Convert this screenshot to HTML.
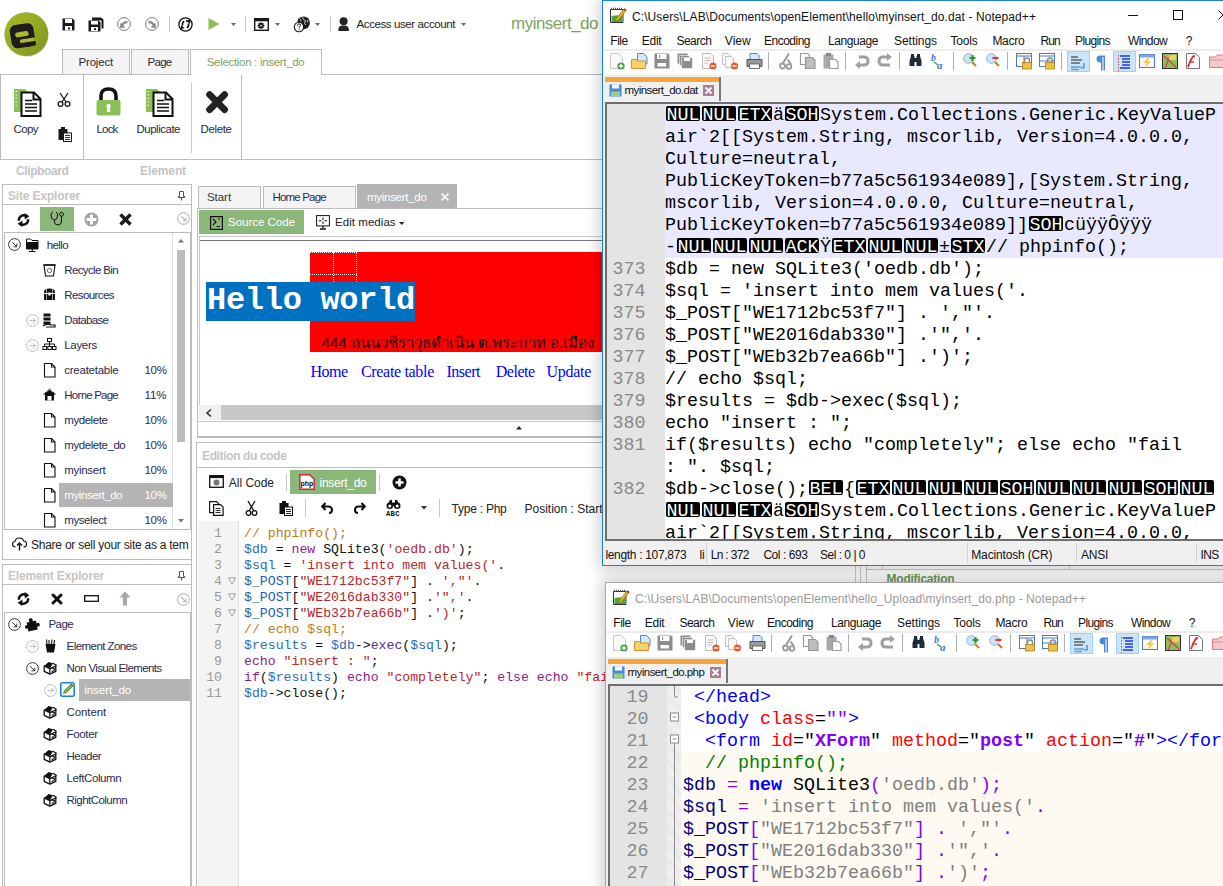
<!DOCTYPE html>
<html><head><meta charset="utf-8">
<style>
*{margin:0;padding:0;box-sizing:border-box}
html,body{width:1223px;height:886px;overflow:hidden;background:#fff}
body{position:relative;font-family:"Liberation Sans",sans-serif;font-size:11px;color:#222}
.a{position:absolute}
.t{position:absolute;white-space:nowrap;line-height:1}
</style></head><body>
<svg class="a" style="left:0px;top:8px;overflow:visible" width="54" height="54" viewBox="0 0 54 54"><defs><linearGradient id="lg" x1="0" y1="0" x2="1" y2="1"><stop offset="0" stop-color="#a9ba25"/><stop offset="1" stop-color="#7f951d"/></linearGradient></defs>
<circle cx="26.6" cy="26.6" r="22" fill="#555" opacity="0.35"/>
<circle cx="26.3" cy="26.1" r="21.9" fill="url(#lg)"/>
<g transform="rotate(-9 22.5 27)">
<rect x="9.6" y="15.2" width="25.4" height="25" rx="6.5" fill="#c2d02a" opacity="0.5"/>
<rect x="10.4" y="16" width="24" height="23.5" rx="6" fill="#1f1b1e"/>
<rect x="22" y="30" width="12.4" height="9.5" rx="2" fill="#1f1b1e"/>
<rect x="15.2" y="23.6" width="13.6" height="5" rx="2.5" fill="#a9bd27"/>
<rect x="19" y="31.2" width="15.6" height="3.6" rx="1.2" fill="#a9bd27"/><rect x="33.2" y="31.2" width="4" height="3.6" fill="#8ea21f"/>
</g></svg>
<svg class="a" style="left:62px;top:18px;overflow:visible" width="13" height="13" viewBox="0 0 13 13"><path d="M0.5 0.5h10l2 2v10h-12z" fill="#1a1a1a"/><rect x="3" y="1" width="7" height="4" fill="#fff"/><rect x="3" y="8" width="7" height="4.5" fill="#fff"/><rect x="6" y="9.5" width="2" height="2" fill="#1a1a1a"/></svg>
<svg class="a" style="left:88px;top:17px;overflow:visible" width="16" height="15" viewBox="0 0 16 15"><path d="M4 0.5h9l2.5 2v9h-2v-8h-9.5z" fill="#1a1a1a"/><path d="M0.5 3.5h10l2 2v9h-12z" fill="#1a1a1a"/><rect x="3" y="4" width="7" height="3.5" fill="#fff"/><rect x="3" y="10" width="7" height="4" fill="#fff"/><rect x="6" y="11.2" width="2" height="1.8" fill="#1a1a1a"/></svg>
<svg class="a" style="left:117px;top:17px;overflow:visible" width="14" height="14" viewBox="0 0 14 14"><circle cx="7" cy="7" r="6.4" fill="none" stroke="#7a7a7a" stroke-width="1"/><path d="M5.2 8.8 Q6 5 10.5 5.2" fill="none" stroke="#8a8a8a" stroke-width="2.3"/><path d="M3 11 L3.4 5.6 L8.4 10.6 Z" fill="#8a8a8a"/></svg>
<svg class="a" style="left:145px;top:17px;overflow:visible" width="14" height="14" viewBox="0 0 14 14"><circle cx="7" cy="7" r="6.4" fill="none" stroke="#7a7a7a" stroke-width="1"/><path d="M3.5 5.2 Q8 5 8.8 8.8" fill="none" stroke="#8a8a8a" stroke-width="2.3"/><path d="M11 11 L10.6 5.6 L5.6 10.6 Z" fill="#8a8a8a"/></svg>
<div class="a" style="left:169px;top:16px;width:1px;height:16px;background:#c8c8c8"></div>
<svg class="a" style="left:178px;top:17px;overflow:visible" width="15" height="15" viewBox="0 0 15 15"><circle cx="7.5" cy="7.5" r="6.6" fill="none" stroke="#111" stroke-width="1.3"/><path d="M6.2 4.2 Q4 5 4.5 8.5" fill="none" stroke="#111" stroke-width="1.6"/><path d="M2.8 12 L3 8 L6.8 11.2 Z" fill="#111"/><path d="M8.8 10.8 Q11 10 10.5 6.5" fill="none" stroke="#111" stroke-width="1.6"/><path d="M12.2 3 L12 7 L8.2 3.8 Z" fill="#111"/><path d="M8 4 H11" stroke="#111" stroke-width="1.5"/></svg>
<svg class="a" style="left:208px;top:18px;overflow:visible" width="12" height="12" viewBox="0 0 12 12"><path d="M0.5 0 L11.5 6 L0.5 12 Z" fill="#8cbf55"/></svg>
<svg class="a" style="left:231px;top:23px;overflow:visible" width="6" height="4" viewBox="0 0 6 4"><path d="M0 0h5l-2.5 3z" fill="#666"/></svg>
<div class="a" style="left:245px;top:16px;width:1px;height:16px;background:#c8c8c8"></div>
<svg class="a" style="left:254px;top:18px;overflow:visible" width="15" height="13" viewBox="0 0 15 13"><rect x="0.7" y="0.7" width="13.6" height="11.6" fill="none" stroke="#1a1a1a" stroke-width="1.4"/><rect x="0.7" y="0.7" width="13.6" height="2.6" fill="#1a1a1a"/><circle cx="7" cy="7.6" r="2.6" fill="#1a1a1a"/><path d="M7 4.2v6.8M3.6 7.6h6.8M4.6 5.2l4.8 4.8M9.4 5.2l-4.8 4.8" stroke="#1a1a1a" stroke-width="1.3"/><circle cx="7" cy="7.6" r="0.9" fill="#fff"/></svg>
<svg class="a" style="left:275px;top:23px;overflow:visible" width="6" height="4" viewBox="0 0 6 4"><path d="M0 0h5l-2.5 3z" fill="#666"/></svg>
<svg class="a" style="left:294px;top:16px;overflow:visible" width="16" height="16" viewBox="0 0 16 16"><circle cx="9.5" cy="6.8" r="6.4" fill="#1a1a1a"/><path d="M5.5 2.5 Q7.5 3.5 7 5.5 M9 1 Q8 3 10 4 Q12 4 11 6 Q10 8 12 9 M13.5 4 Q12.5 5 14 6.5" fill="none" stroke="#fff" stroke-width="0.8"/><circle cx="5" cy="11" r="4.7" fill="#fff" stroke="#1a1a1a" stroke-width="1.1"/><path d="M3.5 9.6 Q3.6 7.8 5.1 7.8 Q6.6 7.9 6.5 9.3 Q6.4 10.2 5.2 10.8 V11.8" fill="none" stroke="#1a1a1a" stroke-width="1"/><circle cx="5.2" cy="13.3" r="0.6" fill="#1a1a1a"/></svg>
<svg class="a" style="left:315px;top:23px;overflow:visible" width="6" height="4" viewBox="0 0 6 4"><path d="M0 0h5l-2.5 3z" fill="#666"/></svg>
<div class="a" style="left:330px;top:16px;width:1px;height:16px;background:#c8c8c8"></div>
<svg class="a" style="left:338px;top:16.5px;overflow:visible" width="12" height="14" viewBox="0 0 12 14"><circle cx="5.6" cy="4.3" r="4" fill="#222"/><path d="M0.3 14 Q0 9 4 8.6 H7.2 Q11.2 9 10.9 14 Z" fill="#222"/></svg>
<div class="t" style="left:356.50px;top:18.96px;font-size:11.5px;color:#222;letter-spacing:-0.397px;">Access user account</div>
<svg class="a" style="left:461px;top:23px;overflow:visible" width="6" height="4" viewBox="0 0 6 4"><path d="M0 0h5l-2.5 3z" fill="#666"/></svg>
<div class="t" style="left:511.00px;top:14.81px;font-size:17px;color:#7fa35f;letter-spacing:-0.507px;">myinsert_do</div>
<div class="a" style="left:62px;top:49px;width:68px;height:26px;background:#f4f4f4;border:1px solid #bcbcbc;border-bottom:none"></div>
<div class="t" style="left:78.50px;top:57.46px;font-size:11.5px;color:#2a2a3a;letter-spacing:-0.183px;">Project</div>
<div class="a" style="left:131px;top:49px;width:58px;height:26px;background:#f4f4f4;border:1px solid #bcbcbc;border-bottom:none"></div>
<div class="t" style="left:147.50px;top:57.46px;font-size:11.5px;color:#2a2a3a;letter-spacing:-0.711px;">Page</div>
<div class="a" style="left:190px;top:49px;width:132px;height:26px;background:#fff;border:1px solid #bcbcbc;border-bottom:none;z-index:2"></div>
<div class="t" style="left:206.70px;top:57.46px;font-size:11.5px;color:#7fa35f;letter-spacing:-0.307px;z-index:3">Selection : insert_do</div>
<div class="a" style="left:0px;top:74px;width:620px;height:86px;border-top:1px solid #bcbcbc;border-bottom:1px solid #bcbcbc;border-left:1px solid #bcbcbc"></div>
<div class="a" style="left:83px;top:74px;width:1px;height:86px;background:#bcbcbc"></div>
<div class="a" style="left:241px;top:74px;width:1px;height:86px;background:#bcbcbc"></div>
<div class="a" style="left:191px;top:82px;width:1px;height:71px;background:#c8c8c8"></div>
<svg class="a" style="left:13px;top:88px;overflow:visible" width="29" height="29" viewBox="0 0 29 29"><path d="M1 1h11l4 4v19h-15z" fill="#8cbf55"/><path d="M2.5 3.5h1.5M2.5 7h1.5M2.5 10.5h1.5M2.5 14h1.5M2.5 17.5h1.5" stroke="#fff" stroke-width="1.2"/>
<path d="M8.5 4.5h12.5l6.5 6.5v17h-19z" fill="#fff" stroke="#111" stroke-width="2"/><path d="M20.5 4.5v7h7" fill="none" stroke="#111" stroke-width="2"/>
<path d="M12 12.5h7M12 16h12M12 19.5h12M12 23h12" stroke="#111" stroke-width="1.6"/></svg>
<div class="t" style="left:13.50px;top:123.96px;font-size:11.5px;color:#2a2a3a;letter-spacing:-0.586px;">Copy</div>
<svg class="a" style="left:57px;top:93px;overflow:visible" width="14" height="14" viewBox="0 0 14 14"><path d="M3 0 L9 9 M11 0 L5 9" stroke="#1a1a1a" stroke-width="1.3"/><circle cx="3.5" cy="11" r="2.4" fill="none" stroke="#1a1a1a" stroke-width="1.3"/><circle cx="10.5" cy="11" r="2.4" fill="none" stroke="#1a1a1a" stroke-width="1.3"/></svg>
<svg class="a" style="left:58px;top:126px;overflow:visible" width="14" height="16" viewBox="0 0 14 16"><path d="M0.5 3h9v11h-9z" fill="#1a1a1a"/><rect x="3" y="1" width="4" height="3" fill="#1a1a1a"/><rect x="5.5" y="7" width="8" height="8.5" fill="#fff" stroke="#1a1a1a" stroke-width="1"/><path d="M7 9.5h5M7 11.5h5M7 13.5h5" stroke="#1a1a1a" stroke-width="0.9"/></svg>
<svg class="a" style="left:96px;top:87px;overflow:visible" width="25" height="29" viewBox="0 0 25 29"><path d="M5 15 V9 Q5 2 12.5 2 Q20 2 20 9 V15" fill="none" stroke="#111" stroke-width="3.6"/><rect x="0.5" y="13" width="24" height="15.5" rx="2" fill="#8cbf55"/><circle cx="12.5" cy="19" r="2.2" fill="#fff"/><path d="M11.3 19h2.4l0.6 6h-3.6z" fill="#fff"/></svg>
<div class="t" style="left:96.50px;top:123.96px;font-size:11.5px;color:#2a2a3a;letter-spacing:-0.820px;">Lock</div>
<svg class="a" style="left:145px;top:88px;overflow:visible" width="29" height="29" viewBox="0 0 29 29"><path d="M1 1h11l4 4v19h-15z" fill="#8cbf55"/><path d="M2.5 3.5h1.5M2.5 7h1.5M2.5 10.5h1.5M2.5 14h1.5M2.5 17.5h1.5" stroke="#fff" stroke-width="1.2"/>
<path d="M8.5 4.5h12.5l6.5 6.5v17h-19z" fill="#fff" stroke="#111" stroke-width="2"/><path d="M20.5 4.5v7h7" fill="none" stroke="#111" stroke-width="2"/>
<path d="M12 12.5h7M12 16h12M12 19.5h12M12 23h12" stroke="#111" stroke-width="1.6"/></svg>
<div class="t" style="left:136.50px;top:123.96px;font-size:11.5px;color:#2a2a3a;letter-spacing:-0.493px;">Duplicate</div>
<svg class="a" style="left:205px;top:90px;overflow:visible" width="24" height="24" viewBox="0 0 24 24"><path d="M4.6 4.6 L19.6 19.6 M19.6 4.6 L4.6 19.6" stroke="#222" stroke-width="6.8" stroke-linecap="round"/></svg>
<div class="t" style="left:200.50px;top:123.96px;font-size:11.5px;color:#2a2a3a;letter-spacing:-0.372px;">Delete</div>
<div class="t" style="left:16.00px;top:165.04px;font-size:12px;color:#c4c4c4;letter-spacing:-0.387px;font-weight:bold;">Clipboard</div>
<div class="t" style="left:140.00px;top:165.04px;font-size:12px;color:#c4c4c4;letter-spacing:-0.096px;font-weight:bold;">Element</div>
<div class="a" style="left:2px;top:184px;width:190px;height:376px;border:1px solid #bcbcbc;background:#fff"></div>
<div class="t" style="left:8.00px;top:189.54px;font-size:12px;color:#c8c4c0;letter-spacing:-0.154px;font-weight:bold;">Site Explorer</div>
<svg class="a" style="left:178px;top:191px;overflow:visible" width="7" height="9" viewBox="0 0 7 9"><path d="M1.5 0.5h4v5h1.3v1h-6.6v-1h1.3z" fill="none" stroke="#555" stroke-width="1"/><path d="M3.5 6.5v3" stroke="#555" stroke-width="1"/></svg>
<div class="a" style="left:2px;top:204px;width:190px;height:1px;background:#bcbcbc"></div>
<svg class="a" style="left:17px;top:213px;overflow:visible" width="13" height="14" viewBox="0 0 13 14"><path d="M2 7.8 A4.6 4.6 0 0 1 9 3.1" fill="none" stroke="#111" stroke-width="2.4"/><path d="M7.6 0 L12.4 3.2 L7.8 6.4 Z" fill="#111"/><path d="M11 6.2 A4.6 4.6 0 0 1 4 10.9" fill="none" stroke="#111" stroke-width="2.4"/><path d="M5.4 7.6 L0.6 10.8 L5.2 14 Z" fill="#111"/></svg>
<div class="a" style="left:40px;top:207px;width:34px;height:24px;background:#8cb77a"></div>
<svg class="a" style="left:50px;top:211px;overflow:visible" width="14" height="15" viewBox="0 0 14 15"><path d="M3 1 Q0.5 2 1 5 Q2 9 4.5 9 Q7 9 7.5 5 Q8 2 6 1" fill="none" stroke="#111" stroke-width="1"/><path d="M4.5 9 V11 Q4.5 14 8 14 Q11.5 14 11.5 10 V5" fill="none" stroke="#111" stroke-width="1"/><circle cx="11.5" cy="3.3" r="1.9" fill="none" stroke="#111" stroke-width="1"/></svg>
<svg class="a" style="left:84px;top:212px;overflow:visible" width="15" height="15" viewBox="0 0 15 15"><circle cx="7.5" cy="7.5" r="6.9" fill="#a4a4a4"/><path d="M7.5 2.6v9.8M2.6 7.5h9.8" stroke="#fff" stroke-width="3"/><circle cx="7.5" cy="7.5" r="6.2" fill="none" stroke="#a4a4a4" stroke-width="1.2"/></svg>
<svg class="a" style="left:119px;top:213px;overflow:visible" width="13" height="13" viewBox="0 0 13 13"><path d="M1.5 1.5 L11.5 11.5 M11.5 1.5 L1.5 11.5" stroke="#1a1a1a" stroke-width="3.4"/></svg>
<svg class="a" style="left:177px;top:212px;overflow:visible" width="13" height="13" viewBox="0 0 13 13"><circle cx="6.5" cy="6.5" r="5.9" fill="none" stroke="#bdbdbd" stroke-width="1.1"/><path d="M4 4 L9 9 M9 5.5 V9 H5.5" fill="none" stroke="#bdbdbd" stroke-width="1.1"/></svg>
<div class="a" style="left:4px;top:232px;width:187px;height:298px;border:1px solid #bcbcbc;background:#fff"></div>
<div class="a" style="left:172px;top:233px;width:1px;height:296px;background:#e0e0e0"></div>
<div class="a" style="left:177px;top:250px;width:8px;height:192px;background:#bcbcbc"></div>
<svg class="a" style="left:178px;top:239px;overflow:visible" width="6" height="4" viewBox="0 0 6 4"><path d="M0 3.5h6l-3-3.5z" fill="#777"/></svg>
<svg class="a" style="left:178px;top:519px;overflow:visible" width="6" height="4" viewBox="0 0 6 4"><path d="M0 0h6l-3 3.5z" fill="#777"/></svg>
<svg class="a" style="left:8px;top:238px;overflow:visible" width="13" height="13" viewBox="0 0 13 13"><circle cx="6.5" cy="6.5" r="5.9" fill="none" stroke="#222" stroke-width="0.9"/><path d="M4.2 4.2 L8.8 8.8 M8.8 5.6 V8.8 H5.6" fill="none" stroke="#222" stroke-width="0.9"/></svg>
<svg class="a" style="left:26px;top:238px;overflow:visible" width="13" height="15" viewBox="0 0 13 15"><path d="M0.5 1h4l1.5 1.5h6v8.5h-11.5z" fill="#fff" stroke="#111" stroke-width="1"/><path d="M0.5 4h11.5v7h-11.5z" fill="#111"/><path d="M6.3 11v2.5M3 13.5h6.5" stroke="#111" stroke-width="1.2"/></svg>
<div class="t" style="left:46.70px;top:239.96px;font-size:11.5px;color:#2a2a50;letter-spacing:-0.599px;">hello</div>
<svg class="a" style="left:43px;top:263px;overflow:visible" width="13" height="14" viewBox="0 0 13 14"><path d="M1 2h11l-1.5 11h-8z" fill="#fff" stroke="#111" stroke-width="1.1"/><path d="M0.5 2h12" stroke="#111" stroke-width="1.5"/><circle cx="6.5" cy="7.5" r="2.2" fill="none" stroke="#555" stroke-width="0.9"/></svg>
<div class="t" style="left:64.30px;top:264.96px;font-size:11.5px;color:#2a2a50;letter-spacing:-0.638px;">Recycle Bin</div>
<svg class="a" style="left:43px;top:288px;overflow:visible" width="13" height="14" viewBox="0 0 13 14"><path d="M1 4 Q1 0.5 6.5 0.5 Q12 0.5 12 4 V12 H1 Z" fill="#111"/><path d="M1 5.5h11" stroke="#fff" stroke-width="1"/><rect x="5.3" y="4.5" width="2.4" height="3" fill="#fff"/><path d="M3.5 1 V12 M9.5 1 V12" stroke="#fff" stroke-width="0.6"/></svg>
<div class="t" style="left:64.30px;top:289.96px;font-size:11.5px;color:#2a2a50;letter-spacing:-0.606px;">Resources</div>
<svg class="a" style="left:26px;top:314px;overflow:visible" width="13" height="13" viewBox="0 0 13 13"><circle cx="6.5" cy="6.5" r="5.9" fill="none" stroke="#c0c0c0" stroke-width="1"/><path d="M3.5 6.5 H9.5 M7 4 L9.5 6.5 L7 9" fill="none" stroke="#c0c0c0" stroke-width="1"/></svg>
<svg class="a" style="left:43px;top:313px;overflow:visible" width="13" height="14" viewBox="0 0 13 14"><rect x="0.5" y="0.5" width="7" height="3" fill="#111"/><rect x="0.5" y="4.5" width="7" height="3" fill="#111"/><rect x="0.5" y="8.5" width="7" height="3" fill="#111"/><path d="M0 13 Q4 10 8 12 L12 12 V14 H3" fill="none" stroke="#111" stroke-width="1.2"/></svg>
<div class="t" style="left:64.30px;top:314.96px;font-size:11.5px;color:#2a2a50;letter-spacing:-0.650px;">Database</div>
<svg class="a" style="left:26px;top:339px;overflow:visible" width="13" height="13" viewBox="0 0 13 13"><circle cx="6.5" cy="6.5" r="5.9" fill="none" stroke="#c0c0c0" stroke-width="1"/><path d="M3.5 6.5 H9.5 M7 4 L9.5 6.5 L7 9" fill="none" stroke="#c0c0c0" stroke-width="1"/></svg>
<svg class="a" style="left:43px;top:338px;overflow:visible" width="13" height="14" viewBox="0 0 13 14"><rect x="4.5" y="0.5" width="4" height="3" fill="none" stroke="#111" stroke-width="1"/><path d="M6.5 3.5v2.5M1.5 6h10M1.5 6v2M6.5 6v2M11.5 6v2" stroke="#111" stroke-width="1"/><rect x="0" y="8.5" width="3.5" height="3" fill="none" stroke="#111" stroke-width="1"/><rect x="4.8" y="8.5" width="3.5" height="3" fill="none" stroke="#111" stroke-width="1"/><rect x="9.5" y="8.5" width="3.5" height="3" fill="none" stroke="#111" stroke-width="1"/></svg>
<div class="t" style="left:64.30px;top:339.96px;font-size:11.5px;color:#2a2a50;letter-spacing:-0.333px;">Layers</div>
<svg class="a" style="left:43px;top:363px;overflow:visible" width="13" height="14" viewBox="0 0 13 14"><path d="M1.5 0.5h7l3.5 3.5v10h-10.5z" fill="#fff" stroke="#111" stroke-width="1.1"/><path d="M8.5 0.5v3.5h3.5" fill="none" stroke="#111" stroke-width="1.1"/></svg>
<div class="t" style="left:64.30px;top:364.96px;font-size:11.5px;color:#2a2a50;letter-spacing:-0.260px;">createtable</div>
<div class="t" style="left:144.50px;top:364.96px;font-size:11.5px;color:#2a2a50;letter-spacing:-0.333px;">10%</div>
<svg class="a" style="left:43px;top:388px;overflow:visible" width="13" height="14" viewBox="0 0 13 14"><path d="M6.5 0.5 L13 6.5 H11 V12.5 H2 V6.5 H0 Z" fill="#111"/><rect x="4.5" y="8" width="4" height="4.5" fill="#fff"/><path d="M3 4 L6.5 1.5 L10 4" fill="none" stroke="#fff" stroke-width="0.7"/></svg>
<div class="t" style="left:64.30px;top:389.96px;font-size:11.5px;color:#2a2a50;letter-spacing:-0.800px;">Home Page</div>
<div class="t" style="left:144.50px;top:389.96px;font-size:11.5px;color:#2a2a50;letter-spacing:-0.047px;">11%</div>
<svg class="a" style="left:43px;top:413px;overflow:visible" width="13" height="14" viewBox="0 0 13 14"><path d="M1.5 0.5h7l3.5 3.5v10h-10.5z" fill="#fff" stroke="#111" stroke-width="1.1"/><path d="M8.5 0.5v3.5h3.5" fill="none" stroke="#111" stroke-width="1.1"/></svg>
<div class="t" style="left:64.30px;top:414.96px;font-size:11.5px;color:#2a2a50;letter-spacing:-0.455px;">mydelete</div>
<div class="t" style="left:144.50px;top:414.96px;font-size:11.5px;color:#2a2a50;letter-spacing:-0.333px;">10%</div>
<svg class="a" style="left:43px;top:438px;overflow:visible" width="13" height="14" viewBox="0 0 13 14"><path d="M1.5 0.5h7l3.5 3.5v10h-10.5z" fill="#fff" stroke="#111" stroke-width="1.1"/><path d="M8.5 0.5v3.5h3.5" fill="none" stroke="#111" stroke-width="1.1"/></svg>
<div class="t" style="left:64.30px;top:439.96px;font-size:11.5px;color:#2a2a50;letter-spacing:-0.438px;">mydelete_do</div>
<div class="t" style="left:144.50px;top:439.96px;font-size:11.5px;color:#2a2a50;letter-spacing:-0.333px;">10%</div>
<svg class="a" style="left:43px;top:463px;overflow:visible" width="13" height="14" viewBox="0 0 13 14"><path d="M1.5 0.5h7l3.5 3.5v10h-10.5z" fill="#fff" stroke="#111" stroke-width="1.1"/><path d="M8.5 0.5v3.5h3.5" fill="none" stroke="#111" stroke-width="1.1"/></svg>
<div class="t" style="left:64.30px;top:464.96px;font-size:11.5px;color:#2a2a50;letter-spacing:-0.305px;">myinsert</div>
<div class="t" style="left:144.50px;top:464.96px;font-size:11.5px;color:#2a2a50;letter-spacing:-0.333px;">10%</div>
<div class="a" style="left:59px;top:483px;width:114px;height:24px;background:#b4b4b4"></div>
<svg class="a" style="left:43px;top:488px;overflow:visible" width="13" height="14" viewBox="0 0 13 14"><path d="M1.5 0.5h7l3.5 3.5v10h-10.5z" fill="#fff" stroke="#111" stroke-width="1.1"/><path d="M8.5 0.5v3.5h3.5" fill="none" stroke="#111" stroke-width="1.1"/></svg>
<div class="t" style="left:64.30px;top:489.96px;font-size:11.5px;color:#fff;letter-spacing:-0.419px;">myinsert_do</div>
<div class="t" style="left:144.50px;top:489.96px;font-size:11.5px;color:#fff;letter-spacing:-0.333px;">10%</div>
<svg class="a" style="left:43px;top:513px;overflow:visible" width="13" height="14" viewBox="0 0 13 14"><path d="M1.5 0.5h7l3.5 3.5v10h-10.5z" fill="#fff" stroke="#111" stroke-width="1.1"/><path d="M8.5 0.5v3.5h3.5" fill="none" stroke="#111" stroke-width="1.1"/></svg>
<div class="t" style="left:64.30px;top:514.96px;font-size:11.5px;color:#2a2a50;letter-spacing:-0.420px;">myselect</div>
<div class="t" style="left:144.50px;top:514.96px;font-size:11.5px;color:#2a2a50;letter-spacing:-0.333px;">10%</div>
<svg class="a" style="left:12px;top:537px;overflow:visible" width="15" height="14" viewBox="0 0 15 14"><path d="M3.5 10 Q0.5 10 0.5 7 Q0.5 4.5 3 4.5 Q3.5 1 7.5 1 Q11 1 11.5 4 Q14.5 4 14.5 7.2 Q14.5 10 11.5 10" fill="none" stroke="#111" stroke-width="1.1"/><path d="M7.5 13.5 V6 M5 8.5 L7.5 6 L10 8.5" fill="none" stroke="#111" stroke-width="1.4"/></svg>
<div class="t" style="left:31.00px;top:538.54px;font-size:12px;color:#222;letter-spacing:-0.246px;">Share or sell your site as a tem</div>
<div class="a" style="left:2px;top:564px;width:190px;height:330px;border:1px solid #bcbcbc;background:#fff"></div>
<div class="t" style="left:8.00px;top:569.54px;font-size:12px;color:#c8c4c0;letter-spacing:-0.167px;font-weight:bold;">Element Explorer</div>
<svg class="a" style="left:178px;top:571px;overflow:visible" width="7" height="9" viewBox="0 0 7 9"><path d="M1.5 0.5h4v5h1.3v1h-6.6v-1h1.3z" fill="none" stroke="#555" stroke-width="1"/><path d="M3.5 6.5v3" stroke="#555" stroke-width="1"/></svg>
<div class="a" style="left:2px;top:584px;width:190px;height:1px;background:#bcbcbc"></div>
<svg class="a" style="left:17px;top:592px;overflow:visible" width="13" height="14" viewBox="0 0 13 14"><path d="M2 7.8 A4.6 4.6 0 0 1 9 3.1" fill="none" stroke="#111" stroke-width="2.4"/><path d="M7.6 0 L12.4 3.2 L7.8 6.4 Z" fill="#111"/><path d="M11 6.2 A4.6 4.6 0 0 1 4 10.9" fill="none" stroke="#111" stroke-width="2.4"/><path d="M5.4 7.6 L0.6 10.8 L5.2 14 Z" fill="#111"/></svg>
<svg class="a" style="left:51px;top:593px;overflow:visible" width="12" height="12" viewBox="0 0 12 12"><path d="M2 2 L10 10 M10 2 L2 10" stroke="#111" stroke-width="3" stroke-linecap="round"/></svg>
<svg class="a" style="left:84px;top:595px;overflow:visible" width="15" height="7" viewBox="0 0 15 7"><rect x="0.7" y="0.7" width="13.6" height="5.6" fill="none" stroke="#111" stroke-width="1.3"/></svg>
<svg class="a" style="left:119px;top:591px;overflow:visible" width="12" height="15" viewBox="0 0 12 15"><path d="M6 0.5 L11.5 6.5 H8 V14.5 H4 V6.5 H0.5 Z" fill="#a8a8a8"/></svg>
<svg class="a" style="left:177px;top:593px;overflow:visible" width="13" height="13" viewBox="0 0 13 13"><circle cx="6.5" cy="6.5" r="5.9" fill="none" stroke="#bdbdbd" stroke-width="1.1"/><path d="M4 4 L9 9 M9 5.5 V9 H5.5" fill="none" stroke="#bdbdbd" stroke-width="1.1"/></svg>
<div class="a" style="left:4px;top:612px;width:187px;height:280px;border:1px solid #bcbcbc;background:#fff"></div>
<svg class="a" style="left:8px;top:618px;overflow:visible" width="13" height="13" viewBox="0 0 13 13"><circle cx="6.5" cy="6.5" r="5.9" fill="none" stroke="#222" stroke-width="0.9"/><path d="M4.2 4.2 L8.8 8.8 M8.8 5.6 V8.8 H5.6" fill="none" stroke="#222" stroke-width="0.9"/></svg>
<svg class="a" style="left:25px;top:617px;overflow:visible" width="14" height="14" viewBox="0 0 14 14"><g transform="rotate(-12 7 7)"><path d="M2 4.5 H5 Q3.8 1 6.6 1 Q9.4 1 8.2 4.5 H11.5 V7.5 Q14.5 6.3 14.5 9 Q14.5 11.7 11.5 10.5 V13.5 H2 V10.3 Q-0.5 11.3 -0.5 8.8 Q-0.5 6.3 2 7.3 Z" fill="#111"/></g></svg>
<div class="t" style="left:48.50px;top:619.46px;font-size:11.5px;color:#2a2a50;letter-spacing:-0.586px;">Page</div>
<svg class="a" style="left:26px;top:640px;overflow:visible" width="13" height="13" viewBox="0 0 13 13"><circle cx="6.5" cy="6.5" r="5.9" fill="none" stroke="#c0c0c0" stroke-width="1"/><path d="M3.5 6.5 H9.5 M7 4 L9.5 6.5 L7 9" fill="none" stroke="#c0c0c0" stroke-width="1"/></svg>
<svg class="a" style="left:44.5px;top:639px;overflow:visible" width="11" height="14" viewBox="0 0 11 14"><path d="M0.5 5h10l-1.5 8.5h-7z" fill="#111"/><path d="M2 5 L1.5 0.5 M4 5 V1 M6.5 5 L7 0.5 M9 5 L9.5 1" stroke="#111" stroke-width="1.1"/></svg>
<div class="t" style="left:66.60px;top:641.46px;font-size:11.5px;color:#2a2a50;letter-spacing:-0.562px;">Element Zones</div>
<svg class="a" style="left:26px;top:662px;overflow:visible" width="13" height="13" viewBox="0 0 13 13"><circle cx="6.5" cy="6.5" r="5.9" fill="none" stroke="#222" stroke-width="0.9"/><path d="M4.2 4.2 L8.8 8.8 M8.8 5.6 V8.8 H5.6" fill="none" stroke="#222" stroke-width="0.9"/></svg>
<svg class="a" style="left:43px;top:661px;overflow:visible" width="13" height="14" viewBox="0 0 13 14"><path d="M1.2 5 L6.8 7.6 L12.8 5 V10.4 L6.8 13.2 L1.2 10.4 Z" fill="#fff" stroke="#111" stroke-width="1.3" stroke-linejoin="round"/><path d="M6.8 7.6 V13" stroke="#111" stroke-width="1.2"/><path d="M1.2 5 L5.5 1 L10 2.2 L6.8 7.6 Z" fill="#111"/><path d="M10 2.2 L13.2 4.2 L12.8 5" fill="none" stroke="#111" stroke-width="1.2"/><path d="M8.5 7.2 Q11.8 6.8 11.5 8.6 Q11 10 8.6 10.4" fill="none" stroke="#111" stroke-width="1.2"/></svg>
<div class="t" style="left:66.60px;top:663.46px;font-size:11.5px;color:#2a2a50;letter-spacing:-0.617px;">Non Visual Elements</div>
<svg class="a" style="left:44px;top:684px;overflow:visible" width="13" height="13" viewBox="0 0 13 13"><circle cx="6.5" cy="6.5" r="5.9" fill="none" stroke="#c0c0c0" stroke-width="1"/><path d="M3.5 6.5 H9.5 M7 4 L9.5 6.5 L7 9" fill="none" stroke="#c0c0c0" stroke-width="1"/></svg>
<svg class="a" style="left:60px;top:682px;overflow:visible" width="15" height="15" viewBox="0 0 15 15"><rect x="0.8" y="0.8" width="13.4" height="13.4" rx="1.5" fill="#fff" stroke="#1e7fd8" stroke-width="1.6"/><path d="M3.5 11.5 L4.5 8.5 L11 2 L13 4 L6.5 10.5 Z" fill="#6cc04a" stroke="#2d6a1a" stroke-width="0.6"/><path d="M11 2 L13 4" stroke="#d03030" stroke-width="1.5"/></svg>
<div class="a" style="left:79px;top:679px;width:111px;height:22px;background:#b4b4b4"></div>
<div class="t" style="left:84.20px;top:685.46px;font-size:11.5px;color:#fff;letter-spacing:-0.031px;">insert_do</div>
<svg class="a" style="left:43px;top:705px;overflow:visible" width="13" height="14" viewBox="0 0 13 14"><path d="M1.2 5 L6.8 7.6 L12.8 5 V10.4 L6.8 13.2 L1.2 10.4 Z" fill="#fff" stroke="#111" stroke-width="1.3" stroke-linejoin="round"/><path d="M6.8 7.6 V13" stroke="#111" stroke-width="1.2"/><path d="M1.2 5 L5.5 1 L10 2.2 L6.8 7.6 Z" fill="#111"/><path d="M10 2.2 L13.2 4.2 L12.8 5" fill="none" stroke="#111" stroke-width="1.2"/><path d="M8.5 7.2 Q11.8 6.8 11.5 8.6 Q11 10 8.6 10.4" fill="none" stroke="#111" stroke-width="1.2"/></svg>
<div class="t" style="left:66.60px;top:707.46px;font-size:11.5px;color:#2a2a50;letter-spacing:-0.107px;">Content</div>
<svg class="a" style="left:43px;top:727px;overflow:visible" width="13" height="14" viewBox="0 0 13 14"><path d="M1.2 5 L6.8 7.6 L12.8 5 V10.4 L6.8 13.2 L1.2 10.4 Z" fill="#fff" stroke="#111" stroke-width="1.3" stroke-linejoin="round"/><path d="M6.8 7.6 V13" stroke="#111" stroke-width="1.2"/><path d="M1.2 5 L5.5 1 L10 2.2 L6.8 7.6 Z" fill="#111"/><path d="M10 2.2 L13.2 4.2 L12.8 5" fill="none" stroke="#111" stroke-width="1.2"/><path d="M8.5 7.2 Q11.8 6.8 11.5 8.6 Q11 10 8.6 10.4" fill="none" stroke="#111" stroke-width="1.2"/></svg>
<div class="t" style="left:66.60px;top:729.46px;font-size:11.5px;color:#2a2a50;letter-spacing:-0.370px;">Footer</div>
<svg class="a" style="left:43px;top:749px;overflow:visible" width="13" height="14" viewBox="0 0 13 14"><path d="M1.2 5 L6.8 7.6 L12.8 5 V10.4 L6.8 13.2 L1.2 10.4 Z" fill="#fff" stroke="#111" stroke-width="1.3" stroke-linejoin="round"/><path d="M6.8 7.6 V13" stroke="#111" stroke-width="1.2"/><path d="M1.2 5 L5.5 1 L10 2.2 L6.8 7.6 Z" fill="#111"/><path d="M10 2.2 L13.2 4.2 L12.8 5" fill="none" stroke="#111" stroke-width="1.2"/><path d="M8.5 7.2 Q11.8 6.8 11.5 8.6 Q11 10 8.6 10.4" fill="none" stroke="#111" stroke-width="1.2"/></svg>
<div class="t" style="left:66.60px;top:751.46px;font-size:11.5px;color:#2a2a50;letter-spacing:-0.534px;">Header</div>
<svg class="a" style="left:43px;top:771px;overflow:visible" width="13" height="14" viewBox="0 0 13 14"><path d="M1.2 5 L6.8 7.6 L12.8 5 V10.4 L6.8 13.2 L1.2 10.4 Z" fill="#fff" stroke="#111" stroke-width="1.3" stroke-linejoin="round"/><path d="M6.8 7.6 V13" stroke="#111" stroke-width="1.2"/><path d="M1.2 5 L5.5 1 L10 2.2 L6.8 7.6 Z" fill="#111"/><path d="M10 2.2 L13.2 4.2 L12.8 5" fill="none" stroke="#111" stroke-width="1.2"/><path d="M8.5 7.2 Q11.8 6.8 11.5 8.6 Q11 10 8.6 10.4" fill="none" stroke="#111" stroke-width="1.2"/></svg>
<div class="t" style="left:66.60px;top:773.46px;font-size:11.5px;color:#2a2a50;letter-spacing:-0.428px;">LeftColumn</div>
<svg class="a" style="left:43px;top:793px;overflow:visible" width="13" height="14" viewBox="0 0 13 14"><path d="M1.2 5 L6.8 7.6 L12.8 5 V10.4 L6.8 13.2 L1.2 10.4 Z" fill="#fff" stroke="#111" stroke-width="1.3" stroke-linejoin="round"/><path d="M6.8 7.6 V13" stroke="#111" stroke-width="1.2"/><path d="M1.2 5 L5.5 1 L10 2.2 L6.8 7.6 Z" fill="#111"/><path d="M10 2.2 L13.2 4.2 L12.8 5" fill="none" stroke="#111" stroke-width="1.2"/><path d="M8.5 7.2 Q11.8 6.8 11.5 8.6 Q11 10 8.6 10.4" fill="none" stroke="#111" stroke-width="1.2"/></svg>
<div class="t" style="left:66.60px;top:795.46px;font-size:11.5px;color:#2a2a50;letter-spacing:-0.543px;">RightColumn</div>
<div class="a" style="left:191px;top:184px;width:1px;height:702px;background:#bcbcbc"></div>
<div class="a" style="left:198px;top:186px;width:63px;height:22px;background:#f4f4f4;border:1px solid #bcbcbc;border-bottom:none"></div>
<div class="t" style="left:207.00px;top:192.46px;font-size:11.5px;color:#333;letter-spacing:-0.053px;">Start</div>
<div class="a" style="left:263px;top:186px;width:93px;height:22px;background:#f4f4f4;border:1px solid #bcbcbc;border-bottom:none"></div>
<div class="t" style="left:272.50px;top:192.46px;font-size:11.5px;color:#2a2a50;letter-spacing:-0.823px;">Home Page</div>
<div class="a" style="left:357px;top:184px;width:100px;height:24px;background:#b4b4b4"></div>
<div class="t" style="left:367.00px;top:191.96px;font-size:11.5px;color:#fff;letter-spacing:-0.283px;">myinsert_do</div>
<svg class="a" style="left:441px;top:193px;overflow:visible" width="8" height="8" viewBox="0 0 8 8"><path d="M0.5 0.5 L7.5 7.5 M7.5 0.5 L0.5 7.5" stroke="#fff" stroke-width="1.5"/></svg>
<div class="a" style="left:197px;top:208px;width:430px;height:230px;border:1px solid #bcbcbc;background:#fff"></div>
<div class="a" style="left:199px;top:210px;width:105px;height:24px;background:#8cb77a"></div>
<svg class="a" style="left:210px;top:216px;overflow:visible" width="13" height="14" viewBox="0 0 13 14"><rect x="0.6" y="0.6" width="11.8" height="12.8" fill="none" stroke="#111" stroke-width="1.2"/><path d="M3 3 L6 6 L3 9 M6.5 10.5h3.5 M8 3h2" fill="none" stroke="#111" stroke-width="1.1"/></svg>
<div class="t" style="left:228.00px;top:217.46px;font-size:11.5px;color:#fff;letter-spacing:-0.009px;">Source Code</div>
<svg class="a" style="left:316px;top:215px;overflow:visible" width="14" height="15" viewBox="0 0 14 15"><rect x="0.6" y="0.6" width="12.8" height="10.3" fill="none" stroke="#111" stroke-width="1"/><path d="M7 2.5v2.5M7 6.5v2.5M3 5.8h2.5M8.5 5.8h2.5" stroke="#111" stroke-width="1"/><path d="M7 11v2M4 14h6" stroke="#111" stroke-width="1.4"/></svg>
<div class="t" style="left:335.00px;top:217.46px;font-size:11.5px;color:#222;letter-spacing:0.049px;">Edit medias</div>
<svg class="a" style="left:399px;top:222px;overflow:visible" width="6" height="4" viewBox="0 0 6 4"><path d="M0 0h5.5l-2.75 3z" fill="#222"/></svg>
<div class="a" style="left:197px;top:236px;width:430px;height:1px;background:#c8c8c8"></div>
<div class="a" style="left:199px;top:240px;width:430px;height:1px;background:#777"></div>
<div class="a" style="left:199px;top:236px;width:1px;height:184px;background:#c8c8c8"></div>
<div class="a" style="left:310px;top:252px;width:320px;height:100px;background:#ff0000"></div>
<div class="a" style="left:310px;top:252px;width:47px;height:30px;border-top:1px dotted #fff;border-right:1px dotted #fff"></div>
<div class="a" style="left:333px;top:252px;width:1px;height:30px;border-left:1px dotted #fff"></div>
<div class="a" style="left:310px;top:274px;width:47px;height:1px;border-top:1px dotted #fff"></div>
<div class="a" style="left:206px;top:282px;width:209px;height:39px;background:#0070c0"></div>
<div class="t" style="left:207.00px;top:285.48px;font-size:32px;color:#fff;letter-spacing:-0.294px;font-weight:bold;font-family:'Liberation Mono',monospace;">Hello world</div>
<div class="t" style="left:321.50px;top:334.50px;font-size:15px;color:#111;">444 ถนนวชิราวุธดำเนิน ต.พระบาท อ.เมือง</div>
<div class="t" style="left:310.60px;top:363.64px;font-size:16px;color:#0000ff;letter-spacing:-0.531px;font-family:'Liberation Serif',serif;">Home</div>
<div class="t" style="left:361.00px;top:363.64px;font-size:16px;color:#0000ff;letter-spacing:-0.326px;font-family:'Liberation Serif',serif;">Create table</div>
<div class="t" style="left:446.50px;top:363.64px;font-size:16px;color:#0000ff;letter-spacing:-0.492px;font-family:'Liberation Serif',serif;">Insert</div>
<div class="t" style="left:495.70px;top:363.64px;font-size:16px;color:#0000ff;letter-spacing:-0.466px;font-family:'Liberation Serif',serif;">Delete</div>
<div class="t" style="left:546.40px;top:363.64px;font-size:16px;color:#0000ff;letter-spacing:-0.272px;font-family:'Liberation Serif',serif;">Update</div>
<div class="a" style="left:199px;top:405px;width:430px;height:15px;background:#c8c8c8"></div>
<div class="a" style="left:199px;top:405px;width:22px;height:15px;background:#f0f0f0"></div>
<svg class="a" style="left:206px;top:409px;overflow:visible" width="6" height="8" viewBox="0 0 6 8"><path d="M5 0.5 L1 4 L5 7.5" fill="none" stroke="#333" stroke-width="1.6"/></svg>
<div class="a" style="left:197px;top:421px;width:430px;height:1px;background:#c8c8c8"></div>
<svg class="a" style="left:516px;top:426px;overflow:visible" width="7" height="4" viewBox="0 0 7 4"><path d="M0 3.5h6l-3-3.5z" fill="#222"/></svg>
<div class="a" style="left:197px;top:436px;width:430px;height:1px;background:#bcbcbc"></div>
<div class="a" style="left:196px;top:442px;width:430px;height:450px;border:1px solid #bcbcbc;background:#fff"></div>
<div class="t" style="left:202.00px;top:449.54px;font-size:12px;color:#c8c4c0;letter-spacing:-0.364px;font-weight:bold;">Edition du code</div>
<div class="a" style="left:196px;top:467px;width:430px;height:1px;background:#bcbcbc"></div>
<svg class="a" style="left:209px;top:475px;overflow:visible" width="15" height="13" viewBox="0 0 15 13"><rect x="0.7" y="0.7" width="13.6" height="11.6" fill="none" stroke="#111" stroke-width="1.3"/><rect x="0.7" y="0.7" width="13.6" height="2.4" fill="#111"/><circle cx="7.5" cy="7.5" r="3" fill="#777"/></svg>
<div class="t" style="left:228.80px;top:477.04px;font-size:12px;color:#222;letter-spacing:-0.020px;">All Code</div>
<div class="a" style="left:286px;top:474px;width:1px;height:17px;background:#c8c8c8"></div>
<div class="a" style="left:290px;top:470px;width:86px;height:24px;background:#8cb77a"></div>
<svg class="a" style="left:299px;top:474px;overflow:visible" width="16" height="16" viewBox="0 0 16 16"><path d="M0.8 0.8h10l4.4 4.4v10h-14.4z" fill="#fff" stroke="#c8312a" stroke-width="1.5"/><text x="1.5" y="12" font-family="Liberation Sans" font-weight="bold" font-size="7" fill="#111">php</text></svg>
<div class="t" style="left:319.50px;top:477.04px;font-size:12px;color:#fff;letter-spacing:-0.262px;">insert_do</div>
<div class="a" style="left:379px;top:474px;width:1px;height:17px;background:#c8c8c8"></div>
<svg class="a" style="left:392px;top:475px;overflow:visible" width="15" height="15" viewBox="0 0 15 15"><circle cx="7.5" cy="7.5" r="7" fill="#111"/><path d="M7.5 3.5v8M3.5 7.5h8" stroke="#fff" stroke-width="2.6"/></svg>
<svg class="a" style="left:209px;top:501px;overflow:visible" width="15" height="15" viewBox="0 0 15 15"><path d="M0.6 0.6h7l2 2v9h-9z" fill="#fff" stroke="#111" stroke-width="1.1"/><path d="M4.6 3.6h7l2.5 2.5v8.3h-9.5z" fill="#fff" stroke="#111" stroke-width="1.2"/><path d="M6.5 7.5h5M6.5 9.5h5M6.5 11.5h5" stroke="#111" stroke-width="0.9"/></svg>
<svg class="a" style="left:245px;top:501px;overflow:visible" width="13" height="15" viewBox="0 0 13 15"><path d="M3 0 L9 10 M10 0 L4 10" stroke="#111" stroke-width="1.3"/><circle cx="3.5" cy="12" r="2.3" fill="none" stroke="#111" stroke-width="1.3"/><circle cx="9.5" cy="12" r="2.3" fill="none" stroke="#111" stroke-width="1.3"/></svg>
<svg class="a" style="left:279px;top:500px;overflow:visible" width="14" height="16" viewBox="0 0 14 16"><path d="M0.5 3h9v11h-9z" fill="#111"/><rect x="3" y="1" width="4" height="3" fill="#111"/><rect x="5.5" y="7" width="8" height="8.5" fill="#fff" stroke="#111" stroke-width="1"/><path d="M7 9.5h5M7 11.5h5M7 13.5h5" stroke="#111" stroke-width="0.9"/></svg>
<div class="a" style="left:305px;top:499px;width:1px;height:18px;background:#c8c8c8"></div>
<svg class="a" style="left:321px;top:502px;overflow:visible" width="12" height="12" viewBox="0 0 12 12"><path d="M4.5 1 L1.2 4.5 L4.5 8 M1.5 4.5 H7 Q11 4.5 11 8 Q11 11 8 11" fill="none" stroke="#111" stroke-width="2.1"/></svg>
<svg class="a" style="left:354px;top:502px;overflow:visible" width="12" height="12" viewBox="0 0 12 12"><path d="M7.5 1 L10.8 4.5 L7.5 8 M10.5 4.5 H5 Q1 4.5 1 8 Q1 11 4 11" fill="none" stroke="#111" stroke-width="2.1"/></svg>
<svg class="a" style="left:386px;top:499px;overflow:visible" width="15" height="17" viewBox="0 0 15 17"><path d="M2.5 4 L4 1 H6 V4 M12.5 4 L11 1 H9 V4" fill="#111"/><circle cx="3.8" cy="6.8" r="3.3" fill="#111"/><circle cx="11.2" cy="6.8" r="3.3" fill="#111"/><rect x="5.5" y="3.5" width="4" height="3.5" fill="#111"/><circle cx="3.8" cy="7" r="1.5" fill="#fff"/><circle cx="11.2" cy="7" r="1.5" fill="#fff"/><text x="0" y="16.8" font-family="Liberation Mono" font-weight="bold" font-size="7.2" fill="#111" letter-spacing="0.3">ABC</text></svg>
<svg class="a" style="left:421px;top:506px;overflow:visible" width="7" height="4" viewBox="0 0 7 4"><path d="M0 0h6l-3 3.5z" fill="#333"/></svg>
<div class="a" style="left:439px;top:499px;width:1px;height:18px;background:#c8c8c8"></div>
<div class="t" style="left:451.50px;top:502.54px;font-size:12px;color:#222;letter-spacing:-0.234px;">Type : Php</div>
<div class="t" style="left:524.50px;top:502.54px;font-size:12px;color:#222;">Position : StartBody</div>
<div class="a" style="left:198px;top:521px;width:40px;height:370px;background:#f4f4f4"></div>
<div class="a" style="left:238px;top:521px;width:1px;height:370px;background:#e0e0e0"></div>
<div class="t" style="left:214.07px;top:527.39px;font-size:13.2px;color:#999;font-family:'Liberation Mono',monospace;">1</div>
<div class="t" style="left:244px;top:527.39px;font-family:'Liberation Mono',monospace;font-size:13.2px;"><span style="color:#bb7a1c">// phpinfo();</span></div>
<div class="t" style="left:214.07px;top:543.39px;font-size:13.2px;color:#999;font-family:'Liberation Mono',monospace;">2</div>
<div class="t" style="left:244px;top:543.39px;font-family:'Liberation Mono',monospace;font-size:13.2px;"><span style="color:#2b6cb8">$db</span><span style="color:#111"> = </span><span style="color:#8b1a8b">new</span><span style="color:#111"> SQLite3(</span><span style="color:#b8252a">'oedb.db'</span><span style="color:#111">);</span></div>
<div class="t" style="left:214.07px;top:559.39px;font-size:13.2px;color:#999;font-family:'Liberation Mono',monospace;">3</div>
<div class="t" style="left:244px;top:559.39px;font-family:'Liberation Mono',monospace;font-size:13.2px;"><span style="color:#2b6cb8">$sql</span><span style="color:#111"> = </span><span style="color:#b8252a">'insert into mem values('</span><span style="color:#111">.</span></div>
<div class="t" style="left:214.07px;top:575.39px;font-size:13.2px;color:#999;font-family:'Liberation Mono',monospace;">4</div>
<svg class="a" style="left:228px;top:576.5px;overflow:visible" width="8" height="8" viewBox="0 0 8 8"><path d="M0.5 0.8 H7.5 L4 7.2 Z" fill="none" stroke="#999" stroke-width="0.9"/></svg>
<div class="t" style="left:244px;top:575.39px;font-family:'Liberation Mono',monospace;font-size:13.2px;"><span style="color:#1a5fb4">$_POST</span><span style="color:#111">[</span><span style="color:#b8252a">"WE1712bc53f7"</span><span style="color:#111">] . </span><span style="color:#b8252a">',"'</span><span style="color:#111">.</span></div>
<div class="t" style="left:214.07px;top:591.39px;font-size:13.2px;color:#999;font-family:'Liberation Mono',monospace;">5</div>
<svg class="a" style="left:228px;top:592.5px;overflow:visible" width="8" height="8" viewBox="0 0 8 8"><path d="M0.5 0.8 H7.5 L4 7.2 Z" fill="none" stroke="#999" stroke-width="0.9"/></svg>
<div class="t" style="left:244px;top:591.39px;font-family:'Liberation Mono',monospace;font-size:13.2px;"><span style="color:#1a5fb4">$_POST</span><span style="color:#111">[</span><span style="color:#b8252a">"WE2016dab330"</span><span style="color:#111">] .</span><span style="color:#b8252a">'",'</span><span style="color:#111">.</span></div>
<div class="t" style="left:214.07px;top:607.39px;font-size:13.2px;color:#999;font-family:'Liberation Mono',monospace;">6</div>
<svg class="a" style="left:228px;top:608.5px;overflow:visible" width="8" height="8" viewBox="0 0 8 8"><path d="M0.5 0.8 H7.5 L4 7.2 Z" fill="none" stroke="#999" stroke-width="0.9"/></svg>
<div class="t" style="left:244px;top:607.39px;font-family:'Liberation Mono',monospace;font-size:13.2px;"><span style="color:#1a5fb4">$_POST</span><span style="color:#111">[</span><span style="color:#b8252a">"WEb32b7ea66b"</span><span style="color:#111">] .</span><span style="color:#b8252a">')'</span><span style="color:#111">;</span></div>
<div class="t" style="left:214.07px;top:623.39px;font-size:13.2px;color:#999;font-family:'Liberation Mono',monospace;">7</div>
<div class="t" style="left:244px;top:623.39px;font-family:'Liberation Mono',monospace;font-size:13.2px;"><span style="color:#bb7a1c">// echo $sql;</span></div>
<div class="t" style="left:214.07px;top:639.39px;font-size:13.2px;color:#999;font-family:'Liberation Mono',monospace;">8</div>
<div class="t" style="left:244px;top:639.39px;font-family:'Liberation Mono',monospace;font-size:13.2px;"><span style="color:#2b6cb8">$results</span><span style="color:#111"> = </span><span style="color:#2b6cb8">$db</span><span style="color:#111">-&gt;</span><span style="color:#5b2a9a">exec</span><span style="color:#111">(</span><span style="color:#2b6cb8">$sql</span><span style="color:#111">);</span></div>
<div class="t" style="left:214.07px;top:655.39px;font-size:13.2px;color:#999;font-family:'Liberation Mono',monospace;">9</div>
<div class="t" style="left:244px;top:655.39px;font-family:'Liberation Mono',monospace;font-size:13.2px;"><span style="color:#8b1a8b">echo</span><span style="color:#111"> </span><span style="color:#b8252a">"insert : "</span><span style="color:#111">;</span></div>
<div class="t" style="left:206.14px;top:671.39px;font-size:13.2px;color:#999;font-family:'Liberation Mono',monospace;">10</div>
<div class="t" style="left:244px;top:671.39px;font-family:'Liberation Mono',monospace;font-size:13.2px;"><span style="color:#8b1a8b">if</span><span style="color:#111">(</span><span style="color:#2b6cb8">$results</span><span style="color:#111">) </span><span style="color:#8b1a8b">echo</span><span style="color:#111"> </span><span style="color:#b8252a">"completely"</span><span style="color:#111">; </span><span style="color:#8b1a8b">else</span><span style="color:#111"> </span><span style="color:#8b1a8b">echo</span><span style="color:#111"> </span><span style="color:#b8252a">"fail : "</span><span style="color:#111">. </span><span style="color:#2b6cb8">$sql</span><span style="color:#111">;</span></div>
<div class="t" style="left:206.14px;top:687.39px;font-size:13.2px;color:#999;font-family:'Liberation Mono',monospace;">11</div>
<div class="t" style="left:244px;top:687.39px;font-family:'Liberation Mono',monospace;font-size:13.2px;"><span style="color:#2b6cb8">$db</span><span style="color:#111">-&gt;</span><span style="color:#111">close();</span></div>
<div class="a" style="left:596px;top:566px;width:627px;height:17px;background:#fff"></div>
<div class="t" style="left:886.60px;top:573.34px;font-size:12px;color:#6a9a5a;letter-spacing:-0.245px;font-weight:bold;">Modification</div>
<div class="a" style="left:882px;top:566px;width:1px;height:4px;background:#c8c8c8"></div>
<div class="a" style="left:1069px;top:566px;width:1px;height:4px;background:#c8c8c8"></div>
<div class="a" style="left:866px;top:569px;width:357px;height:1px;background:#c8c8c8"></div>
<div class="a" style="left:855px;top:566px;width:1px;height:17px;background:#c8c8c8"></div>
<div class="a" style="left:860px;top:566px;width:1px;height:17px;background:#c8c8c8"></div>
<div class="a" style="left:866px;top:566px;width:1px;height:17px;background:#c8c8c8"></div>
<div class="a" style="left:602px;top:0px;width:700px;height:566px;background:#f0f0f0;border:1px solid #1883d7;box-shadow:0 0 14px 3px rgba(0,0,0,0.2)"></div>
<div class="a" style="left:603px;top:1px;width:700px;height:49px;background:#fff"></div>
<svg class="a" style="left:610px;top:7px;overflow:visible" width="17" height="16" viewBox="0 0 17 16"><path d="M0.5 2.5h12.5v13h-12.5z" fill="#fff" stroke="#333" stroke-width="1"/><path d="M1 1.5 H13" stroke="#555" stroke-width="1.5" stroke-dasharray="1 1"/><path d="M1.5 9 H12.5 V15 H1.5 Z" fill="#4aa83a"/><path d="M1.5 9 Q7 7 12.5 9" fill="#9ad060"/><path d="M6 12 L14 2 L16 3.5 L8 13.5 L5.5 14 Z" fill="#f2b020" stroke="#8a5a10" stroke-width="0.6"/><path d="M14 2 L16 3.5" stroke="#c02020" stroke-width="1.6"/></svg>
<div class="t" style="left:632.00px;top:11.14px;font-size:12px;color:#111;letter-spacing:0.086px;">C:\Users\LAB\Documents\openElement\hello\myinsert_do.dat - Notepad++</div>
<div class="a" style="left:1128px;top:15px;width:10px;height:1px;background:#111"></div>
<div class="a" style="left:1173px;top:10px;width:10px;height:10px;border:1px solid #111"></div>
<svg class="a" style="left:1218px;top:10px;overflow:visible" width="10" height="10" viewBox="0 0 10 10"><path d="M0.5 0.5 L9.5 9.5 M9.5 0.5 L0.5 9.5" stroke="#111" stroke-width="1"/></svg>
<div class="t" style="left:610.30px;top:35.34px;font-size:12px;color:#111;letter-spacing:-0.461px;">File</div>
<div class="t" style="left:641.80px;top:35.34px;font-size:12px;color:#111;letter-spacing:-0.293px;">Edit</div>
<div class="t" style="left:676.40px;top:35.34px;font-size:12px;color:#111;letter-spacing:-0.503px;">Search</div>
<div class="t" style="left:724.80px;top:35.34px;font-size:12px;color:#111;letter-spacing:0.051px;">View</div>
<div class="t" style="left:764.00px;top:35.34px;font-size:12px;color:#111;letter-spacing:-0.504px;">Encoding</div>
<div class="t" style="left:828.00px;top:35.34px;font-size:12px;color:#111;letter-spacing:-0.422px;">Language</div>
<div class="t" style="left:894.00px;top:35.34px;font-size:12px;color:#111;letter-spacing:-0.043px;">Settings</div>
<div class="t" style="left:950.50px;top:35.34px;font-size:12px;color:#111;letter-spacing:-0.203px;">Tools</div>
<div class="t" style="left:992.40px;top:35.34px;font-size:12px;color:#111;letter-spacing:-0.269px;">Macro</div>
<div class="t" style="left:1040.60px;top:35.34px;font-size:12px;color:#111;letter-spacing:-1.005px;">Run</div>
<div class="t" style="left:1075.00px;top:35.34px;font-size:12px;color:#111;letter-spacing:-0.623px;">Plugins</div>
<div class="t" style="left:1128.00px;top:35.34px;font-size:12px;color:#111;letter-spacing:-0.615px;">Window</div>
<div class="t" style="left:1185.80px;top:35.34px;font-size:12px;color:#111;letter-spacing:-0.672px;">?</div>
<div class="a" style="left:603px;top:49px;width:700px;height:2px;background:#ececec"></div>
<div class="a" style="left:603px;top:51px;width:700px;height:24px;background:#fff"></div>
<svg class="a" style="left:609px;top:53px;overflow:visible" width="16" height="17" viewBox="0 0 16 17"><path d="M1.5 0.5h8l4 4v11h-12z" fill="#fafafa" stroke="#c8c8c8" stroke-width="1"/><circle cx="12" cy="13" r="3.6" fill="#3a9a3a"/><path d="M12 10.8v4.4M9.8 13h4.4" stroke="#fff" stroke-width="1.4"/></svg>
<svg class="a" style="left:631px;top:53px;overflow:visible" width="17" height="17" viewBox="0 0 17 17"><path d="M6.5 0.5h6l3.5 3.5v7h-9.5z" fill="#d8e8fc" stroke="#4a8ad8" stroke-width="1"/><path d="M0.5 6.5h5l1 1.5h8v7.5h-14z" fill="#f6d36a" stroke="#d89030" stroke-width="1"/></svg>
<svg class="a" style="left:654px;top:53px;overflow:visible" width="16" height="17" viewBox="0 0 16 17"><path d="M0.5 0.5h13.5l1.5 1.5v13.5h-15z" fill="#8c8c8c"/><rect x="3" y="1" width="9.5" height="5" fill="#fff"/><rect x="5" y="2" width="1.2" height="3" fill="#8c8c8c"/><rect x="3.5" y="10" width="8.5" height="3.5" fill="#fff"/></svg>
<svg class="a" style="left:677px;top:53px;overflow:visible" width="16" height="17" viewBox="0 0 16 17"><path d="M0.5 0.5h10v10h-10z" fill="#8c8c8c"/><path d="M2.5 2.5h10v10h-10z" fill="#8c8c8c" stroke="#fff" stroke-width="0.6"/><path d="M4.5 4.5h11v11h-11z" fill="#8c8c8c" stroke="#fff" stroke-width="0.6"/><rect x="7" y="5" width="6" height="3" fill="#fff"/></svg>
<svg class="a" style="left:701px;top:53px;overflow:visible" width="16" height="17" viewBox="0 0 16 17"><path d="M1.5 0.5h8l3 3v12h-11z" fill="#fafafa" stroke="#bcbcbc" stroke-width="1"/><path d="M3.5 5h6M3.5 7.5h6M3.5 10h4" stroke="#aaa" stroke-width="0.8"/><circle cx="12" cy="13" r="3.6" fill="#e8582a"/><path d="M9.8 13h4.4" stroke="#fff" stroke-width="1.4"/></svg>
<svg class="a" style="left:722px;top:53px;overflow:visible" width="17" height="17" viewBox="0 0 17 17"><path d="M0.5 0.5h6l2 2v9h-8z" fill="#fafafa" stroke="#bcbcbc" stroke-width="0.9"/><path d="M3.5 3.5h6l2 2v9h-8z" fill="#fafafa" stroke="#bcbcbc" stroke-width="0.9"/><circle cx="12.5" cy="13" r="3.6" fill="#e8582a"/><path d="M10.3 13h4.4" stroke="#fff" stroke-width="1.4"/></svg>
<svg class="a" style="left:746px;top:53px;overflow:visible" width="17" height="17" viewBox="0 0 17 17"><path d="M4 0.5h7l2 2v4h-9z" fill="#d8e8fc" stroke="#4a8ad8" stroke-width="1"/><path d="M1 6.5h15v7h-15z" fill="#9a9a9a" stroke="#555" stroke-width="1" rx="2"/><rect x="3.5" y="11" width="10" height="4.5" fill="#fff" stroke="#555" stroke-width="0.8"/></svg>
<div class="a" style="left:768px;top:52px;width:1px;height:18px;background:#b0b0b0"></div>
<svg class="a" style="left:779px;top:53px;overflow:visible" width="13" height="17" viewBox="0 0 13 17"><path d="M10 0.5 L4 10 M8.5 6.5 L12 11" stroke="#9a9a9a" stroke-width="2"/><circle cx="3.5" cy="13" r="2.5" fill="none" stroke="#9a9a9a" stroke-width="1.8"/><circle cx="10" cy="13.5" r="2.3" fill="none" stroke="#9a9a9a" stroke-width="1.8"/></svg>
<svg class="a" style="left:800px;top:53px;overflow:visible" width="16" height="17" viewBox="0 0 16 17"><path d="M0.5 0.5h7l2 2v9h-9z" fill="#fff" stroke="#9a9a9a" stroke-width="1.2"/><path d="M5.5 4.5h7l2.5 2.5v8.5h-9.5z" fill="#bdbdbd" stroke="#9a9a9a" stroke-width="1.2"/></svg>
<svg class="a" style="left:823px;top:53px;overflow:visible" width="16" height="17" viewBox="0 0 16 17"><path d="M0.5 1.5h10v14h-10z" fill="#a8a8a8"/><rect x="3" y="0" width="5" height="3" fill="#888"/><path d="M6.5 6.5h6l2.5 2.5v6.5h-8.5z" fill="#fff" stroke="#9a9a9a" stroke-width="1.2"/></svg>
<div class="a" style="left:845px;top:52px;width:1px;height:18px;background:#b0b0b0"></div>
<svg class="a" style="left:855px;top:53px;overflow:visible" width="14" height="17" viewBox="0 0 14 17"><path d="M4 4 H9 Q13 4 13 8 Q13 12 9 12 H2" fill="none" stroke="#a0a0a0" stroke-width="3"/><path d="M0 12 L5 8 V16 Z" fill="#a0a0a0"/></svg>
<svg class="a" style="left:878px;top:53px;overflow:visible" width="14" height="17" viewBox="0 0 14 17"><path d="M10 4 H5 Q1 4 1 8 Q1 12 5 12 H12" fill="none" stroke="#a0a0a0" stroke-width="3" transform="translate(0,0)"/><path d="M14 4 L9 0 V8 Z" fill="#a0a0a0"/></svg>
<div class="a" style="left:899px;top:52px;width:1px;height:18px;background:#b0b0b0"></div>
<svg class="a" style="left:909px;top:53px;overflow:visible" width="13" height="17" viewBox="0 0 13 17"><path d="M0.5 8 L2 3 H5.5 V13 H0.5Z M7.5 3 H11 L12.5 8 V13 H7.5 Z" fill="#1e2a38"/><rect x="5" y="5" width="3" height="4" fill="#1e2a38"/><rect x="2" y="1" width="3" height="2.5" fill="#1e2a38"/><rect x="8" y="1" width="3" height="2.5" fill="#1e2a38"/></svg>
<svg class="a" style="left:931px;top:53px;overflow:visible" width="17" height="17" viewBox="0 0 17 17"><text x="0" y="8" font-family="Liberation Serif" font-style="italic" font-weight="bold" font-size="10" fill="#3a7ad8">b</text><text x="6" y="16" font-family="Liberation Serif" font-style="italic" font-weight="bold" font-size="11" fill="#3a7ad8">a</text><path d="M3 9 L7 12" stroke="#4aa04a" stroke-width="1.5"/></svg>
<div class="a" style="left:953px;top:52px;width:1px;height:18px;background:#b0b0b0"></div>
<svg class="a" style="left:963px;top:53px;overflow:visible" width="14" height="17" viewBox="0 0 14 17"><circle cx="5.5" cy="5.5" r="4.8" fill="#cfe4f8" stroke="#8ab0d8" stroke-width="1"/><path d="M9 9 L13 13" stroke="#c08030" stroke-width="2.2"/><path d="M9.5 2v6M6.5 5h6" stroke="#2a9a2a" stroke-width="2.2"/></svg>
<svg class="a" style="left:986px;top:53px;overflow:visible" width="14" height="17" viewBox="0 0 14 17"><circle cx="5.5" cy="5.5" r="4.8" fill="#cfe4f8" stroke="#8ab0d8" stroke-width="1"/><path d="M9 9 L13 13" stroke="#c08030" stroke-width="2.2"/><path d="M6.5 5h6" stroke="#d83a3a" stroke-width="2.2"/></svg>
<div class="a" style="left:1007px;top:52px;width:1px;height:18px;background:#b0b0b0"></div>
<svg class="a" style="left:1016px;top:53px;overflow:visible" width="17" height="17" viewBox="0 0 17 17"><rect x="0.5" y="0.5" width="15" height="13" fill="#fff" stroke="#4a7ac8" stroke-width="1"/><path d="M0.5 3h15M8 3v10" stroke="#4a7ac8" stroke-width="1"/><path d="M8.5 10 V7.5 Q8.5 5 11 5 Q13.5 5 13.5 7.5 V10" fill="none" stroke="#888" stroke-width="1.4"/><rect x="6.5" y="9.5" width="9" height="6.5" fill="#f0c040" stroke="#b08020" stroke-width="0.8"/></svg>
<svg class="a" style="left:1039px;top:53px;overflow:visible" width="17" height="17" viewBox="0 0 17 17"><rect x="0.5" y="0.5" width="15" height="13" fill="#fff" stroke="#4a7ac8" stroke-width="1"/><path d="M0.5 3h15M0.5 8h15" stroke="#4a7ac8" stroke-width="1"/><path d="M8.5 10 V7.5 Q8.5 5 11 5 Q13.5 5 13.5 7.5 V10" fill="none" stroke="#888" stroke-width="1.4"/><rect x="6.5" y="9.5" width="9" height="6.5" fill="#f0c040" stroke="#b08020" stroke-width="0.8"/></svg>
<div class="a" style="left:1061px;top:52px;width:1px;height:18px;background:#b0b0b0"></div>
<div class="a" style="left:1067px;top:51px;width:23px;height:21px;background:#cce4f7;border:1px solid #99d1ff"></div>
<svg class="a" style="left:1071px;top:55px;overflow:visible" width="15" height="16" viewBox="0 0 15 16"><path d="M0 2h7M0 5h11M0 8h9" stroke="#222" stroke-width="1.2"/><path d="M0 12h10M0 14.5h8" stroke="#6a9ad8" stroke-width="1.5"/><path d="M13 8v5h-3" fill="none" stroke="#3a7ad8" stroke-width="1.2"/></svg>
<svg class="a" style="left:1096px;top:55px;overflow:visible" width="9" height="16" viewBox="0 0 9 16"><path d="M4 0.5h5v15h-1.5v-13.5h-1v13.5h-1.5v-8 Q0.5 7.5 0.5 4 Q0.5 0.5 4 0.5Z" fill="#4a8ad8"/></svg>
<div class="a" style="left:1113px;top:51px;width:23px;height:21px;background:#cce4f7;border:1px solid #99d1ff"></div>
<svg class="a" style="left:1117px;top:55px;overflow:visible" width="15" height="16" viewBox="0 0 15 16"><path d="M3 1h10M5 4h8M5 7h8M5 10h8M3 13h10" stroke="#1a3ad8" stroke-width="1.6"/><path d="M1.5 0v16" stroke="#e83a3a" stroke-width="1" stroke-dasharray="1.5 1.5"/></svg>
<svg class="a" style="left:1139px;top:53px;overflow:visible" width="16" height="17" viewBox="0 0 16 17"><rect x="0.5" y="1.5" width="15" height="13" fill="#f8f8f8" stroke="#4a7ac8" stroke-width="1"/><rect x="0.5" y="1.5" width="15" height="3" fill="#7aa8e8"/><path d="M9 5 L4 10 H7.5 L5.5 15 L12 8.5 H8.5 L10.5 5 Z" fill="#f2c840"/></svg>
<svg class="a" style="left:1162px;top:53px;overflow:visible" width="16" height="17" viewBox="0 0 16 17"><rect x="0.5" y="0.5" width="15" height="15" fill="#8ac060" stroke="#333" stroke-width="1"/><path d="M2 3 L14 14 M9 1 L3 15" stroke="#e83a3a" stroke-width="1.2"/><rect x="7" y="2" width="7" height="5" fill="#f2d060"/></svg>
<svg class="a" style="left:1185px;top:53px;overflow:visible" width="16" height="17" viewBox="0 0 16 17"><path d="M1.5 0.5h9l4 4v11h-13z" fill="#fff" stroke="#777" stroke-width="1"/><path d="M3 14 Q5 8 7 5 Q8 3 10 3" fill="none" stroke="#e02a2a" stroke-width="1.8"/><path d="M4 9h5" stroke="#e02a2a" stroke-width="1.4"/></svg>
<svg class="a" style="left:1209px;top:53px;overflow:visible" width="16" height="17" viewBox="0 0 16 17"><path d="M0.5 4h6l1.5-2h7.5v12.5h-15z" fill="#f3c8c8" stroke="#d88080" stroke-width="1"/><path d="M0.5 7h15" stroke="#d88080" stroke-width="0.8"/></svg>
<div class="a" style="left:605px;top:77px;width:115px;height:25px;background:#f0f0f0"></div>
<div class="a" style="left:605px;top:77px;width:114px;height:5px;background:#f9a33a"></div>
<div class="a" style="left:719px;top:77px;width:2px;height:24px;background:#777"></div>
<svg class="a" style="left:609px;top:84px;overflow:visible" width="13" height="13" viewBox="0 0 13 13"><rect x="0.5" y="0.5" width="12" height="12" fill="#4a88d8"/><rect x="3" y="0.5" width="7" height="4" fill="#fff"/><rect x="2" y="7.5" width="9" height="5" fill="#9ad080"/></svg>
<div class="t" style="left:624.60px;top:84.76px;font-size:11.5px;color:#111;letter-spacing:-0.584px;">myinsert_do.dat</div>
<svg class="a" style="left:703px;top:85px;overflow:visible" width="11" height="11" viewBox="0 0 11 11"><rect x="0" y="0" width="11" height="11" fill="#a97c97"/><path d="M2.5 2.5 L8.5 8.5 M8.5 2.5 L2.5 8.5" stroke="#fff" stroke-width="1.8"/></svg>
<div class="a" style="left:605px;top:102px;width:700px;height:2px;background:#6e6e6e"></div>
<div class="a" style="left:605px;top:102px;width:2px;height:440px;background:#6e6e6e"></div>
<div class="a" style="left:607px;top:104px;width:58px;height:437px;background:#e4e4e4"></div>
<div class="a" style="left:665px;top:104px;width:600px;height:437px;background:#fff"></div>
<div class="a" style="left:665px;top:104px;width:600px;height:154px;background:#e8e8ff"></div>
<style>.cb{display:inline-block;width:36px;padding-left:1.5px;color:#fff;position:relative}.cb i{position:absolute;left:1px;top:-0.8px;width:34px;height:15px;background:#000;border-radius:2px}.cb b{position:relative;font-weight:normal}.pre{white-space:pre}</style>
<div class="a" style="left:665px;top:104px;width:560px;height:437px;overflow:hidden;z-index:0">
<div class="t pre" style="left:0px;top:2.96px;font-family:'Liberation Mono',monospace;font-size:18.33px;color:#000"><span class="cb"><i></i><b>NUL</b></span><span class="cb"><i></i><b>NUL</b></span><span class="cb"><i></i><b>ETX</b></span>ä<span class="cb"><i></i><b>SOH</b></span>System.Collections.Generic.KeyValueP</div>
<div class="t pre" style="left:0px;top:24.96px;font-family:'Liberation Mono',monospace;font-size:18.33px;color:#000">air`2[[System.String, mscorlib, Version=4.0.0.0,</div>
<div class="t pre" style="left:0px;top:46.96px;font-family:'Liberation Mono',monospace;font-size:18.33px;color:#000">Culture=neutral,</div>
<div class="t pre" style="left:0px;top:68.96px;font-family:'Liberation Mono',monospace;font-size:18.33px;color:#000">PublicKeyToken=b77a5c561934e089],[System.String,</div>
<div class="t pre" style="left:0px;top:90.96px;font-family:'Liberation Mono',monospace;font-size:18.33px;color:#000">mscorlib, Version=4.0.0.0, Culture=neutral,</div>
<div class="t pre" style="left:0px;top:112.96px;font-family:'Liberation Mono',monospace;font-size:18.33px;color:#000">PublicKeyToken=b77a5c561934e089]]<span class="cb"><i></i><b>SOH</b></span>cüÿÿÔÿÿÿ</div>
<div class="t pre" style="left:0px;top:134.96px;font-family:'Liberation Mono',monospace;font-size:18.33px;color:#000">-<span class="cb"><i></i><b>NUL</b></span><span class="cb"><i></i><b>NUL</b></span><span class="cb"><i></i><b>NUL</b></span><span class="cb"><i></i><b>ACK</b></span>Ÿ<span class="cb"><i></i><b>ETX</b></span><span class="cb"><i></i><b>NUL</b></span><span class="cb"><i></i><b>NUL</b></span>±<span class="cb"><i></i><b>STX</b></span>// phpinfo();</div>
<div class="t pre" style="left:0px;top:156.96px;font-family:'Liberation Mono',monospace;font-size:18.33px;color:#000">$db = new SQLite3('oedb.db');</div>
<div class="t pre" style="left:0px;top:178.96px;font-family:'Liberation Mono',monospace;font-size:18.33px;color:#000">$sql = 'insert into mem values('.</div>
<div class="t pre" style="left:0px;top:200.96px;font-family:'Liberation Mono',monospace;font-size:18.33px;color:#000">$_POST["WE1712bc53f7"] . ',"'.</div>
<div class="t pre" style="left:0px;top:222.96px;font-family:'Liberation Mono',monospace;font-size:18.33px;color:#000">$_POST["WE2016dab330"] .'",'.</div>
<div class="t pre" style="left:0px;top:244.96px;font-family:'Liberation Mono',monospace;font-size:18.33px;color:#000">$_POST["WEb32b7ea66b"] .')';</div>
<div class="t pre" style="left:0px;top:266.96px;font-family:'Liberation Mono',monospace;font-size:18.33px;color:#000">// echo $sql;</div>
<div class="t pre" style="left:0px;top:288.96px;font-family:'Liberation Mono',monospace;font-size:18.33px;color:#000">$results = $db-&gt;exec($sql);</div>
<div class="t pre" style="left:0px;top:310.96px;font-family:'Liberation Mono',monospace;font-size:18.33px;color:#000">echo "insert : ";</div>
<div class="t pre" style="left:0px;top:332.96px;font-family:'Liberation Mono',monospace;font-size:18.33px;color:#000">if($results) echo "completely"; else echo "fail</div>
<div class="t pre" style="left:0px;top:354.96px;font-family:'Liberation Mono',monospace;font-size:18.33px;color:#000">: ". $sql;</div>
<div class="t pre" style="left:0px;top:376.96px;font-family:'Liberation Mono',monospace;font-size:18.33px;color:#000">$db-&gt;close();<span class="cb"><i></i><b>BEL</b></span>{<span class="cb"><i></i><b>ETX</b></span><span class="cb"><i></i><b>NUL</b></span><span class="cb"><i></i><b>NUL</b></span><span class="cb"><i></i><b>NUL</b></span><span class="cb"><i></i><b>SOH</b></span><span class="cb"><i></i><b>NUL</b></span><span class="cb"><i></i><b>NUL</b></span><span class="cb"><i></i><b>NUL</b></span><span class="cb"><i></i><b>SOH</b></span><span class="cb"><i></i><b>NUL</b></span></div>
<div class="t pre" style="left:0px;top:398.96px;font-family:'Liberation Mono',monospace;font-size:18.33px;color:#000"><span class="cb"><i></i><b>NUL</b></span><span class="cb"><i></i><b>NUL</b></span><span class="cb"><i></i><b>ETX</b></span>ä<span class="cb"><i></i><b>SOH</b></span>System.Collections.Generic.KeyValueP</div>
<div class="t pre" style="left:0px;top:420.96px;font-family:'Liberation Mono',monospace;font-size:18.33px;color:#000">air`2[[System.String, mscorlib, Version=4.0.0.0,</div>
</div>
<div class="t" style="left:612.60px;top:260.96px;font-size:18.33px;color:#8a8a8a;font-family:'Liberation Mono',monospace;">373</div>
<div class="t" style="left:612.60px;top:282.96px;font-size:18.33px;color:#8a8a8a;font-family:'Liberation Mono',monospace;">374</div>
<div class="t" style="left:612.60px;top:304.96px;font-size:18.33px;color:#8a8a8a;font-family:'Liberation Mono',monospace;">375</div>
<div class="t" style="left:612.60px;top:326.96px;font-size:18.33px;color:#8a8a8a;font-family:'Liberation Mono',monospace;">376</div>
<div class="t" style="left:612.60px;top:348.96px;font-size:18.33px;color:#8a8a8a;font-family:'Liberation Mono',monospace;">377</div>
<div class="t" style="left:612.60px;top:370.96px;font-size:18.33px;color:#8a8a8a;font-family:'Liberation Mono',monospace;">378</div>
<div class="t" style="left:612.60px;top:392.96px;font-size:18.33px;color:#8a8a8a;font-family:'Liberation Mono',monospace;">379</div>
<div class="t" style="left:612.60px;top:414.96px;font-size:18.33px;color:#8a8a8a;font-family:'Liberation Mono',monospace;">380</div>
<div class="t" style="left:612.60px;top:436.96px;font-size:18.33px;color:#8a8a8a;font-family:'Liberation Mono',monospace;">381</div>
<div class="t" style="left:612.60px;top:480.96px;font-size:18.33px;color:#8a8a8a;font-family:'Liberation Mono',monospace;">382</div>
<div class="a" style="left:605px;top:539px;width:700px;height:2px;background:#6e6e6e"></div>
<div class="a" style="left:603px;top:541px;width:700px;height:24px;background:#f0f0f0"></div>
<div class="t" style="left:605.40px;top:548.84px;font-size:12px;color:#111;letter-spacing:-0.314px;">length : 107,873</div>
<div class="t" style="left:699.50px;top:548.84px;font-size:12px;color:#111;letter-spacing:-0.172px;">li</div>
<div class="t" style="left:710.70px;top:548.84px;font-size:12px;color:#111;letter-spacing:-0.668px;">Ln : 372</div>
<div class="t" style="left:763.40px;top:548.84px;font-size:12px;color:#111;letter-spacing:-0.446px;">Col : 693</div>
<div class="t" style="left:820.00px;top:548.84px;font-size:12px;color:#111;letter-spacing:-0.496px;">Sel : 0 | 0</div>
<div class="t" style="left:971.30px;top:548.84px;font-size:12px;color:#111;letter-spacing:-0.169px;">Macintosh (CR)</div>
<div class="t" style="left:1081.00px;top:548.84px;font-size:12px;color:#111;letter-spacing:-0.250px;">ANSI</div>
<div class="t" style="left:1200.60px;top:548.84px;font-size:12px;color:#111;letter-spacing:-0.667px;">INS</div>
<div class="a" style="left:706px;top:543px;width:1px;height:20px;background:#d0d0d0"></div>
<div class="a" style="left:966.8px;top:543px;width:1px;height:20px;background:#d0d0d0"></div>
<div class="a" style="left:1076px;top:543px;width:1px;height:20px;background:#d0d0d0"></div>
<div class="a" style="left:1196px;top:543px;width:1px;height:20px;background:#d0d0d0"></div>
<div class="a" style="left:605px;top:582px;width:700px;height:400px;background:#f0f0f0;border:1px solid #a8a8a8;box-shadow:0 0 14px 3px rgba(0,0,0,0.2)"></div>
<div class="a" style="left:606px;top:583px;width:700px;height:49px;background:#fff"></div>
<svg class="a" style="left:613px;top:589px;overflow:visible" width="17" height="16" viewBox="0 0 17 16"><path d="M0.5 2.5h12.5v13h-12.5z" fill="#fff" stroke="#333" stroke-width="1"/><path d="M1 1.5 H13" stroke="#555" stroke-width="1.5" stroke-dasharray="1 1"/><path d="M1.5 9 H12.5 V15 H1.5 Z" fill="#4aa83a"/><path d="M1.5 9 Q7 7 12.5 9" fill="#9ad060"/><path d="M6 12 L14 2 L16 3.5 L8 13.5 L5.5 14 Z" fill="#f2b020" stroke="#8a5a10" stroke-width="0.6"/><path d="M14 2 L16 3.5" stroke="#c02020" stroke-width="1.6"/></svg>
<div class="t" style="left:635.00px;top:593.14px;font-size:12px;color:#9a9a9a;letter-spacing:0.064px;">C:\Users\LAB\Documents\openElement\hello_Upload\myinsert_do.php - Notepad++</div>
<div class="t" style="left:613.30px;top:617.34px;font-size:12px;color:#111;letter-spacing:-0.461px;">File</div>
<div class="t" style="left:644.80px;top:617.34px;font-size:12px;color:#111;letter-spacing:-0.293px;">Edit</div>
<div class="t" style="left:679.40px;top:617.34px;font-size:12px;color:#111;letter-spacing:-0.503px;">Search</div>
<div class="t" style="left:727.80px;top:617.34px;font-size:12px;color:#111;letter-spacing:0.051px;">View</div>
<div class="t" style="left:767.00px;top:617.34px;font-size:12px;color:#111;letter-spacing:-0.504px;">Encoding</div>
<div class="t" style="left:831.00px;top:617.34px;font-size:12px;color:#111;letter-spacing:-0.422px;">Language</div>
<div class="t" style="left:897.00px;top:617.34px;font-size:12px;color:#111;letter-spacing:-0.043px;">Settings</div>
<div class="t" style="left:953.50px;top:617.34px;font-size:12px;color:#111;letter-spacing:-0.203px;">Tools</div>
<div class="t" style="left:995.40px;top:617.34px;font-size:12px;color:#111;letter-spacing:-0.269px;">Macro</div>
<div class="t" style="left:1043.60px;top:617.34px;font-size:12px;color:#111;letter-spacing:-1.005px;">Run</div>
<div class="t" style="left:1078.00px;top:617.34px;font-size:12px;color:#111;letter-spacing:-0.623px;">Plugins</div>
<div class="t" style="left:1131.00px;top:617.34px;font-size:12px;color:#111;letter-spacing:-0.615px;">Window</div>
<div class="t" style="left:1188.80px;top:617.34px;font-size:12px;color:#111;letter-spacing:-0.672px;">?</div>
<div class="a" style="left:606px;top:631px;width:700px;height:2px;background:#ececec"></div>
<div class="a" style="left:606px;top:633px;width:700px;height:24px;background:#fff"></div>
<svg class="a" style="left:612px;top:635px;overflow:visible" width="16" height="17" viewBox="0 0 16 17"><path d="M1.5 0.5h8l4 4v11h-12z" fill="#fafafa" stroke="#c8c8c8" stroke-width="1"/><circle cx="12" cy="13" r="3.6" fill="#3a9a3a"/><path d="M12 10.8v4.4M9.8 13h4.4" stroke="#fff" stroke-width="1.4"/></svg>
<svg class="a" style="left:634px;top:635px;overflow:visible" width="17" height="17" viewBox="0 0 17 17"><path d="M6.5 0.5h6l3.5 3.5v7h-9.5z" fill="#d8e8fc" stroke="#4a8ad8" stroke-width="1"/><path d="M0.5 6.5h5l1 1.5h8v7.5h-14z" fill="#f6d36a" stroke="#d89030" stroke-width="1"/></svg>
<svg class="a" style="left:657px;top:635px;overflow:visible" width="16" height="17" viewBox="0 0 16 17"><path d="M0.5 0.5h13.5l1.5 1.5v13.5h-15z" fill="#8c8c8c"/><rect x="3" y="1" width="9.5" height="5" fill="#fff"/><rect x="5" y="2" width="1.2" height="3" fill="#8c8c8c"/><rect x="3.5" y="10" width="8.5" height="3.5" fill="#fff"/></svg>
<svg class="a" style="left:680px;top:635px;overflow:visible" width="16" height="17" viewBox="0 0 16 17"><path d="M0.5 0.5h10v10h-10z" fill="#8c8c8c"/><path d="M2.5 2.5h10v10h-10z" fill="#8c8c8c" stroke="#fff" stroke-width="0.6"/><path d="M4.5 4.5h11v11h-11z" fill="#8c8c8c" stroke="#fff" stroke-width="0.6"/><rect x="7" y="5" width="6" height="3" fill="#fff"/></svg>
<svg class="a" style="left:704px;top:635px;overflow:visible" width="16" height="17" viewBox="0 0 16 17"><path d="M1.5 0.5h8l3 3v12h-11z" fill="#fafafa" stroke="#bcbcbc" stroke-width="1"/><path d="M3.5 5h6M3.5 7.5h6M3.5 10h4" stroke="#aaa" stroke-width="0.8"/><circle cx="12" cy="13" r="3.6" fill="#e8582a"/><path d="M9.8 13h4.4" stroke="#fff" stroke-width="1.4"/></svg>
<svg class="a" style="left:725px;top:635px;overflow:visible" width="17" height="17" viewBox="0 0 17 17"><path d="M0.5 0.5h6l2 2v9h-8z" fill="#fafafa" stroke="#bcbcbc" stroke-width="0.9"/><path d="M3.5 3.5h6l2 2v9h-8z" fill="#fafafa" stroke="#bcbcbc" stroke-width="0.9"/><circle cx="12.5" cy="13" r="3.6" fill="#e8582a"/><path d="M10.3 13h4.4" stroke="#fff" stroke-width="1.4"/></svg>
<svg class="a" style="left:749px;top:635px;overflow:visible" width="17" height="17" viewBox="0 0 17 17"><path d="M4 0.5h7l2 2v4h-9z" fill="#d8e8fc" stroke="#4a8ad8" stroke-width="1"/><path d="M1 6.5h15v7h-15z" fill="#9a9a9a" stroke="#555" stroke-width="1" rx="2"/><rect x="3.5" y="11" width="10" height="4.5" fill="#fff" stroke="#555" stroke-width="0.8"/></svg>
<div class="a" style="left:771px;top:634px;width:1px;height:18px;background:#b0b0b0"></div>
<svg class="a" style="left:782px;top:635px;overflow:visible" width="13" height="17" viewBox="0 0 13 17"><path d="M10 0.5 L4 10 M8.5 6.5 L12 11" stroke="#9a9a9a" stroke-width="2"/><circle cx="3.5" cy="13" r="2.5" fill="none" stroke="#9a9a9a" stroke-width="1.8"/><circle cx="10" cy="13.5" r="2.3" fill="none" stroke="#9a9a9a" stroke-width="1.8"/></svg>
<svg class="a" style="left:803px;top:635px;overflow:visible" width="16" height="17" viewBox="0 0 16 17"><path d="M0.5 0.5h7l2 2v9h-9z" fill="#fff" stroke="#9a9a9a" stroke-width="1.2"/><path d="M5.5 4.5h7l2.5 2.5v8.5h-9.5z" fill="#bdbdbd" stroke="#9a9a9a" stroke-width="1.2"/></svg>
<svg class="a" style="left:826px;top:635px;overflow:visible" width="16" height="17" viewBox="0 0 16 17"><path d="M0.5 1.5h10v14h-10z" fill="#a8a8a8"/><rect x="3" y="0" width="5" height="3" fill="#888"/><path d="M6.5 6.5h6l2.5 2.5v6.5h-8.5z" fill="#fff" stroke="#9a9a9a" stroke-width="1.2"/></svg>
<div class="a" style="left:848px;top:634px;width:1px;height:18px;background:#b0b0b0"></div>
<svg class="a" style="left:858px;top:635px;overflow:visible" width="14" height="17" viewBox="0 0 14 17"><path d="M4 4 H9 Q13 4 13 8 Q13 12 9 12 H2" fill="none" stroke="#a0a0a0" stroke-width="3"/><path d="M0 12 L5 8 V16 Z" fill="#a0a0a0"/></svg>
<svg class="a" style="left:881px;top:635px;overflow:visible" width="14" height="17" viewBox="0 0 14 17"><path d="M10 4 H5 Q1 4 1 8 Q1 12 5 12 H12" fill="none" stroke="#a0a0a0" stroke-width="3" transform="translate(0,0)"/><path d="M14 4 L9 0 V8 Z" fill="#a0a0a0"/></svg>
<div class="a" style="left:902px;top:634px;width:1px;height:18px;background:#b0b0b0"></div>
<svg class="a" style="left:912px;top:635px;overflow:visible" width="13" height="17" viewBox="0 0 13 17"><path d="M0.5 8 L2 3 H5.5 V13 H0.5Z M7.5 3 H11 L12.5 8 V13 H7.5 Z" fill="#1e2a38"/><rect x="5" y="5" width="3" height="4" fill="#1e2a38"/><rect x="2" y="1" width="3" height="2.5" fill="#1e2a38"/><rect x="8" y="1" width="3" height="2.5" fill="#1e2a38"/></svg>
<svg class="a" style="left:934px;top:635px;overflow:visible" width="17" height="17" viewBox="0 0 17 17"><text x="0" y="8" font-family="Liberation Serif" font-style="italic" font-weight="bold" font-size="10" fill="#3a7ad8">b</text><text x="6" y="16" font-family="Liberation Serif" font-style="italic" font-weight="bold" font-size="11" fill="#3a7ad8">a</text><path d="M3 9 L7 12" stroke="#4aa04a" stroke-width="1.5"/></svg>
<div class="a" style="left:956px;top:634px;width:1px;height:18px;background:#b0b0b0"></div>
<svg class="a" style="left:966px;top:635px;overflow:visible" width="14" height="17" viewBox="0 0 14 17"><circle cx="5.5" cy="5.5" r="4.8" fill="#cfe4f8" stroke="#8ab0d8" stroke-width="1"/><path d="M9 9 L13 13" stroke="#c08030" stroke-width="2.2"/><path d="M9.5 2v6M6.5 5h6" stroke="#2a9a2a" stroke-width="2.2"/></svg>
<svg class="a" style="left:989px;top:635px;overflow:visible" width="14" height="17" viewBox="0 0 14 17"><circle cx="5.5" cy="5.5" r="4.8" fill="#cfe4f8" stroke="#8ab0d8" stroke-width="1"/><path d="M9 9 L13 13" stroke="#c08030" stroke-width="2.2"/><path d="M6.5 5h6" stroke="#d83a3a" stroke-width="2.2"/></svg>
<div class="a" style="left:1010px;top:634px;width:1px;height:18px;background:#b0b0b0"></div>
<svg class="a" style="left:1019px;top:635px;overflow:visible" width="17" height="17" viewBox="0 0 17 17"><rect x="0.5" y="0.5" width="15" height="13" fill="#fff" stroke="#4a7ac8" stroke-width="1"/><path d="M0.5 3h15M8 3v10" stroke="#4a7ac8" stroke-width="1"/><path d="M8.5 10 V7.5 Q8.5 5 11 5 Q13.5 5 13.5 7.5 V10" fill="none" stroke="#888" stroke-width="1.4"/><rect x="6.5" y="9.5" width="9" height="6.5" fill="#f0c040" stroke="#b08020" stroke-width="0.8"/></svg>
<svg class="a" style="left:1042px;top:635px;overflow:visible" width="17" height="17" viewBox="0 0 17 17"><rect x="0.5" y="0.5" width="15" height="13" fill="#fff" stroke="#4a7ac8" stroke-width="1"/><path d="M0.5 3h15M0.5 8h15" stroke="#4a7ac8" stroke-width="1"/><path d="M8.5 10 V7.5 Q8.5 5 11 5 Q13.5 5 13.5 7.5 V10" fill="none" stroke="#888" stroke-width="1.4"/><rect x="6.5" y="9.5" width="9" height="6.5" fill="#f0c040" stroke="#b08020" stroke-width="0.8"/></svg>
<div class="a" style="left:1064px;top:634px;width:1px;height:18px;background:#b0b0b0"></div>
<div class="a" style="left:1070px;top:633px;width:23px;height:21px;background:#cce4f7;border:1px solid #99d1ff"></div>
<svg class="a" style="left:1074px;top:637px;overflow:visible" width="15" height="16" viewBox="0 0 15 16"><path d="M0 2h7M0 5h11M0 8h9" stroke="#222" stroke-width="1.2"/><path d="M0 12h10M0 14.5h8" stroke="#6a9ad8" stroke-width="1.5"/><path d="M13 8v5h-3" fill="none" stroke="#3a7ad8" stroke-width="1.2"/></svg>
<svg class="a" style="left:1099px;top:637px;overflow:visible" width="9" height="16" viewBox="0 0 9 16"><path d="M4 0.5h5v15h-1.5v-13.5h-1v13.5h-1.5v-8 Q0.5 7.5 0.5 4 Q0.5 0.5 4 0.5Z" fill="#4a8ad8"/></svg>
<div class="a" style="left:1116px;top:633px;width:23px;height:21px;background:#cce4f7;border:1px solid #99d1ff"></div>
<svg class="a" style="left:1120px;top:637px;overflow:visible" width="15" height="16" viewBox="0 0 15 16"><path d="M3 1h10M5 4h8M5 7h8M5 10h8M3 13h10" stroke="#1a3ad8" stroke-width="1.6"/><path d="M1.5 0v16" stroke="#e83a3a" stroke-width="1" stroke-dasharray="1.5 1.5"/></svg>
<svg class="a" style="left:1142px;top:635px;overflow:visible" width="16" height="17" viewBox="0 0 16 17"><rect x="0.5" y="1.5" width="15" height="13" fill="#f8f8f8" stroke="#4a7ac8" stroke-width="1"/><rect x="0.5" y="1.5" width="15" height="3" fill="#7aa8e8"/><path d="M9 5 L4 10 H7.5 L5.5 15 L12 8.5 H8.5 L10.5 5 Z" fill="#f2c840"/></svg>
<svg class="a" style="left:1165px;top:635px;overflow:visible" width="16" height="17" viewBox="0 0 16 17"><rect x="0.5" y="0.5" width="15" height="15" fill="#8ac060" stroke="#333" stroke-width="1"/><path d="M2 3 L14 14 M9 1 L3 15" stroke="#e83a3a" stroke-width="1.2"/><rect x="7" y="2" width="7" height="5" fill="#f2d060"/></svg>
<svg class="a" style="left:1188px;top:635px;overflow:visible" width="16" height="17" viewBox="0 0 16 17"><path d="M1.5 0.5h9l4 4v11h-13z" fill="#fff" stroke="#777" stroke-width="1"/><path d="M3 14 Q5 8 7 5 Q8 3 10 3" fill="none" stroke="#e02a2a" stroke-width="1.8"/><path d="M4 9h5" stroke="#e02a2a" stroke-width="1.4"/></svg>
<svg class="a" style="left:1212px;top:635px;overflow:visible" width="16" height="17" viewBox="0 0 16 17"><path d="M0.5 4h6l1.5-2h7.5v12.5h-15z" fill="#f3c8c8" stroke="#d88080" stroke-width="1"/><path d="M0.5 7h15" stroke="#d88080" stroke-width="0.8"/></svg>
<div class="a" style="left:608px;top:659px;width:118.5px;height:25px;background:#f0f0f0"></div>
<div class="a" style="left:608px;top:659px;width:117.5px;height:5px;background:#f9a33a"></div>
<div class="a" style="left:725.5px;top:659px;width:2px;height:24px;background:#777"></div>
<svg class="a" style="left:612px;top:666px;overflow:visible" width="13" height="13" viewBox="0 0 13 13"><rect x="0.5" y="0.5" width="12" height="12" fill="#4a88d8"/><rect x="3" y="0.5" width="7" height="4" fill="#fff"/><rect x="2" y="7.5" width="9" height="5" fill="#9ad080"/></svg>
<div class="t" style="left:627.60px;top:666.76px;font-size:11.5px;color:#111;letter-spacing:-0.558px;">myinsert_do.php</div>
<svg class="a" style="left:709.5px;top:667px;overflow:visible" width="11" height="11" viewBox="0 0 11 11"><rect x="0" y="0" width="11" height="11" fill="#a97c97"/><path d="M2.5 2.5 L8.5 8.5 M8.5 2.5 L2.5 8.5" stroke="#fff" stroke-width="1.8"/></svg>
<div class="a" style="left:608px;top:684px;width:700px;height:2px;background:#6e6e6e"></div>
<div class="a" style="left:608px;top:684px;width:2px;height:440px;background:#6e6e6e"></div>
<div class="a" style="left:610px;top:686px;width:57px;height:220px;background:#e4e4e4"></div>
<div class="a" style="left:667px;top:686px;width:14px;height:220px;background:repeating-linear-gradient(45deg,#f4f4f4 0 1px,#e6e6e6 1px 2px)"></div>
<div class="a" style="left:681px;top:686px;width:560px;height:220px;background:#fff"></div>
<div class="a" style="left:681px;top:752px;width:560px;height:154px;background:#fefaf2"></div>
<svg class="a" style="left:668px;top:686px;overflow:visible" width="13" height="200" viewBox="0 0 13 200"><path d="M6.5 0 V11 H10" fill="none" stroke="#8a8a8a" stroke-width="1"/><rect x="2.5" y="27" width="8" height="8" fill="#fff" stroke="#8a8a8a" stroke-width="1"/><path d="M4.5 31h4" stroke="#8a8a8a" stroke-width="1"/><rect x="2.5" y="49" width="8" height="8" fill="#fff" stroke="#8a8a8a" stroke-width="1"/><path d="M4.5 53h4" stroke="#8a8a8a" stroke-width="1"/><path d="M6.5 57 V200" stroke="#8a8a8a" stroke-width="1"/></svg>
<div class="t" style="left:626.60px;top:688.96px;font-size:18.33px;color:#8a8a8a;font-family:'Liberation Mono',monospace;">19</div>
<div class="t pre" style="left:683px;top:688.96px;font-family:'Liberation Mono',monospace;font-size:18.33px;"><span style="color:#0000ff"> &lt;/head&gt;</span></div>
<div class="t" style="left:626.60px;top:710.96px;font-size:18.33px;color:#8a8a8a;font-family:'Liberation Mono',monospace;">20</div>
<div class="t pre" style="left:683px;top:710.96px;font-family:'Liberation Mono',monospace;font-size:18.33px;"><span style="color:#0000ff"> &lt;body</span><span style="color:#000"> </span><span style="color:#ff0000">class</span><span style="color:#000">=</span><span style="color:#8000ff">""</span><span style="color:#0000ff">&gt;</span></div>
<div class="t" style="left:626.60px;top:732.96px;font-size:18.33px;color:#8a8a8a;font-family:'Liberation Mono',monospace;">21</div>
<div class="t pre" style="left:683px;top:732.96px;font-family:'Liberation Mono',monospace;font-size:18.33px;"><span style="color:#0000ff">  &lt;form</span><span style="color:#000"> </span><span style="color:#ff0000">id</span><span style="color:#000">="</span><span style="color:#8000ff;font-weight:bold">XForm</span><span style="color:#000">"</span><span style="color:#000"> </span><span style="color:#ff0000">method</span><span style="color:#000">="</span><span style="color:#8000ff;font-weight:bold">post</span><span style="color:#000">"</span><span style="color:#000"> </span><span style="color:#ff0000">action</span><span style="color:#000">="</span><span style="color:#8000ff;font-weight:bold">#</span><span style="color:#000">"</span><span style="color:#0000ff">&gt;</span><span style="color:#0000ff">&lt;/form&gt;</span></div>
<div class="t" style="left:626.60px;top:754.96px;font-size:18.33px;color:#8a8a8a;font-family:'Liberation Mono',monospace;">22</div>
<div class="t pre" style="left:683px;top:754.96px;font-family:'Liberation Mono',monospace;font-size:18.33px;"><span style="color:#008000">  // phpinfo();</span></div>
<div class="t" style="left:626.60px;top:776.96px;font-size:18.33px;color:#8a8a8a;font-family:'Liberation Mono',monospace;">23</div>
<div class="t pre" style="left:683px;top:776.96px;font-family:'Liberation Mono',monospace;font-size:18.33px;"><span style="color:#000080">$db</span><span style="color:#8000ff"> = </span><span style="color:#0000ff;font-weight:bold">new</span><span style="color:#000"> SQLite3</span><span style="color:#8000ff">(</span><span style="color:#808080">'oedb.db'</span><span style="color:#8000ff">);</span></div>
<div class="t" style="left:626.60px;top:798.96px;font-size:18.33px;color:#8a8a8a;font-family:'Liberation Mono',monospace;">24</div>
<div class="t pre" style="left:683px;top:798.96px;font-family:'Liberation Mono',monospace;font-size:18.33px;"><span style="color:#000080">$sql</span><span style="color:#8000ff"> = </span><span style="color:#808080">'insert into mem values('</span><span style="color:#8000ff">.</span></div>
<div class="t" style="left:626.60px;top:820.96px;font-size:18.33px;color:#8a8a8a;font-family:'Liberation Mono',monospace;">25</div>
<div class="t pre" style="left:683px;top:820.96px;font-family:'Liberation Mono',monospace;font-size:18.33px;"><span style="color:#000080">$_POST</span><span style="color:#8000ff">[</span><span style="color:#808080">"WE1712bc53f7"</span><span style="color:#8000ff">] . </span><span style="color:#808080">',"'</span><span style="color:#8000ff">.</span></div>
<div class="t" style="left:626.60px;top:842.96px;font-size:18.33px;color:#8a8a8a;font-family:'Liberation Mono',monospace;">26</div>
<div class="t pre" style="left:683px;top:842.96px;font-family:'Liberation Mono',monospace;font-size:18.33px;"><span style="color:#000080">$_POST</span><span style="color:#8000ff">[</span><span style="color:#808080">"WE2016dab330"</span><span style="color:#8000ff">] .</span><span style="color:#808080">'",'</span><span style="color:#8000ff">.</span></div>
<div class="t" style="left:626.60px;top:864.96px;font-size:18.33px;color:#8a8a8a;font-family:'Liberation Mono',monospace;">27</div>
<div class="t pre" style="left:683px;top:864.96px;font-family:'Liberation Mono',monospace;font-size:18.33px;"><span style="color:#000080">$_POST</span><span style="color:#8000ff">[</span><span style="color:#808080">"WEb32b7ea66b"</span><span style="color:#8000ff">] .</span><span style="color:#808080">')'</span><span style="color:#8000ff">;</span></div>
</body></html>
